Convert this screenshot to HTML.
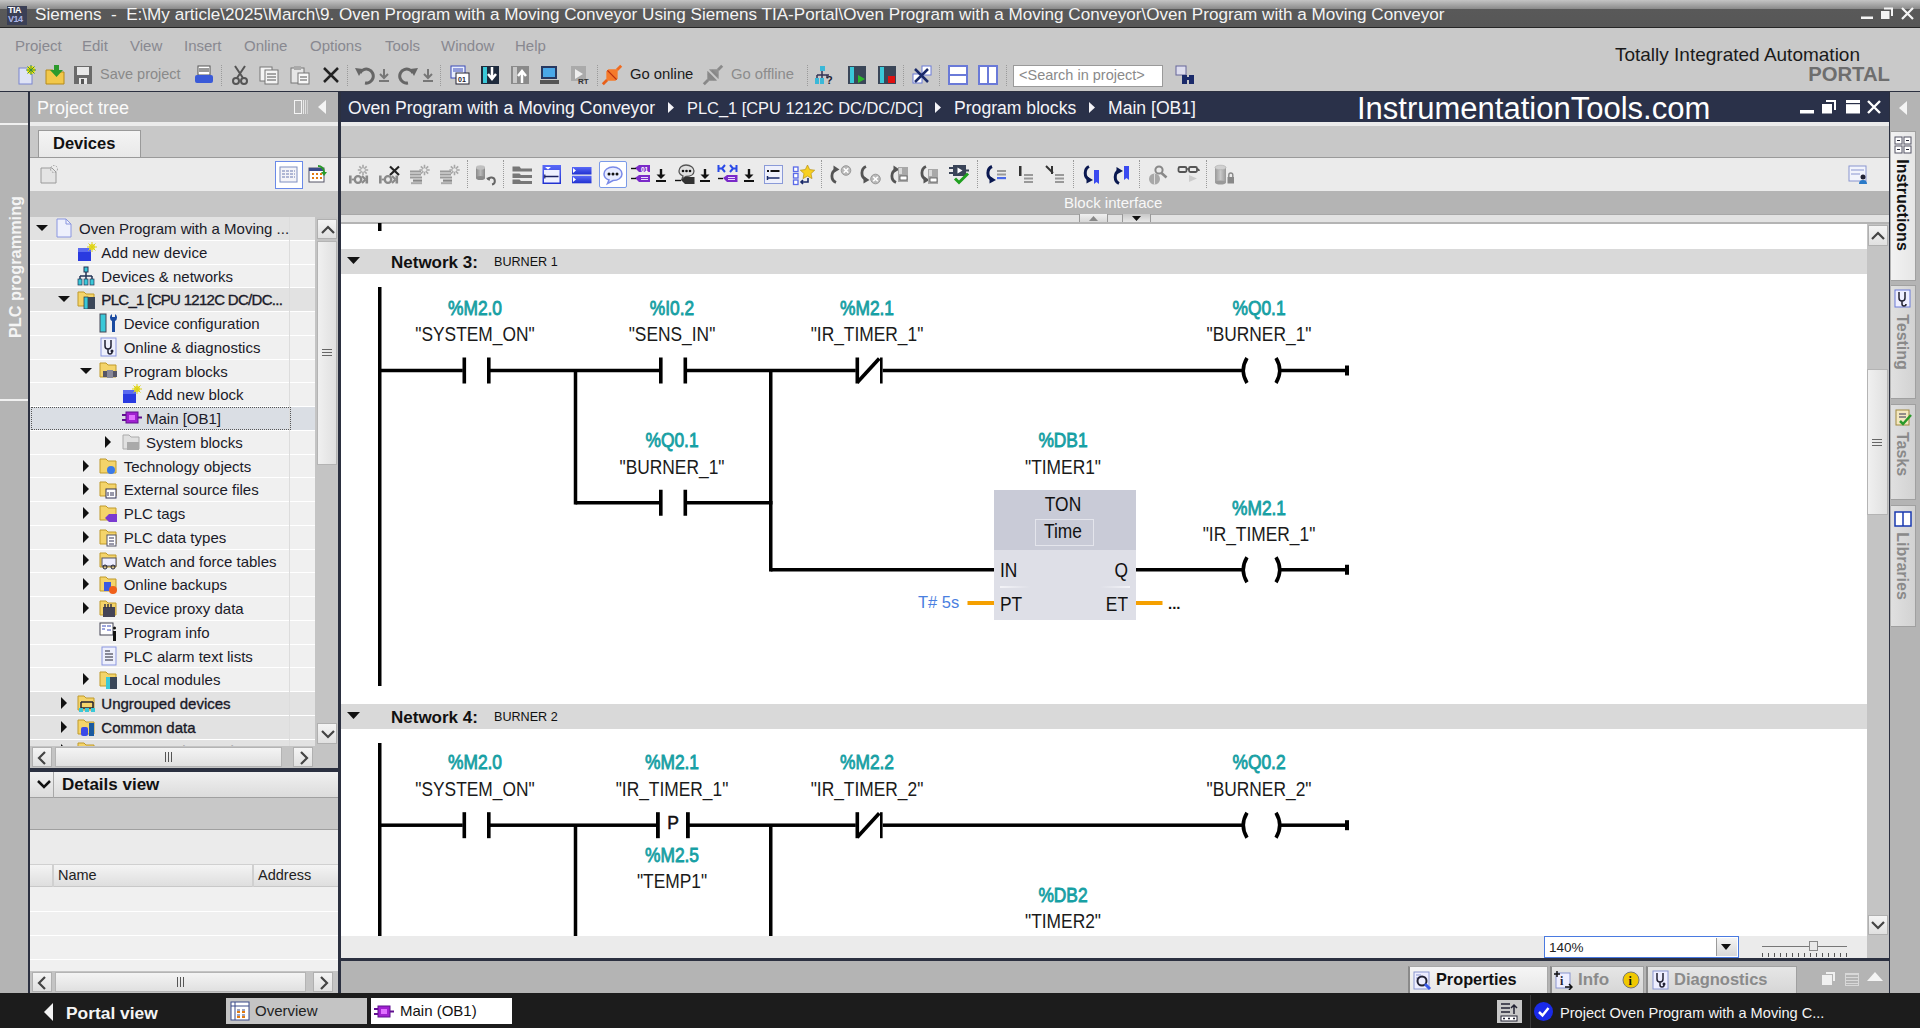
<!DOCTYPE html><html><head><meta charset="utf-8"><style>
html,body{margin:0;padding:0;width:1920px;height:1028px;overflow:hidden;background:#b4b4b4;font-family:"Liberation Sans", sans-serif;}
div{box-sizing:border-box;}
</style></head><body>
<div style="position:absolute;left:0px;top:0px;width:1920px;height:28px;background:linear-gradient(#c4c4c4 0px,#8a8a8a 9px,#595959 9px,#575757 27px,#262626 27px);"></div>
<div style="position:absolute;left:7px;top:6px;width:20px;height:19px;background:#3a3f55;"></div>
<div style="position:absolute;left:8px;top:6px;font-size:9px;line-height:9px;color:#fff;font-weight:bold;white-space:nowrap;letter-spacing:-0.5px;">TIA</div>
<div style="position:absolute;left:8px;top:15px;font-size:9px;line-height:9px;color:#aab4e6;font-weight:bold;white-space:nowrap;letter-spacing:-0.5px;">V14</div>
<div style="position:absolute;left:35px;top:6px;font-size:17.1px;line-height:17.1px;color:#f4f4f4;font-weight:normal;white-space:nowrap;">Siemens&nbsp; - &nbsp;E:\My article\2025\March\9. Oven Program with a Moving Conveyor Using Siemens TIA-Portal\Oven Program with a Moving Conveyor\Oven Program with a Moving Conveyor</div>
<svg style="position:absolute;left:1858px;top:5px" width="60" height="18" viewBox="0 0 60 18"><rect x="3" y="11.5" width="12" height="2.5" fill="#f4f4f4"/><rect x="23" y="6" width="8.5" height="8" fill="#f4f4f4"/><path d="M26 3.5h8v7.5" fill="none" stroke="#f4f4f4" stroke-width="2"/><path d="M44 3l11 11M55 3L44 14" stroke="#f4f4f4" stroke-width="2.2"/></svg>
<div style="position:absolute;left:0px;top:28px;width:1920px;height:64px;background:#c9c9c9;"></div>
<div style="position:absolute;left:15px;top:38px;font-size:15px;line-height:15px;color:#888890;font-weight:normal;white-space:nowrap;">Project</div>
<div style="position:absolute;left:82px;top:38px;font-size:15px;line-height:15px;color:#888890;font-weight:normal;white-space:nowrap;">Edit</div>
<div style="position:absolute;left:130px;top:38px;font-size:15px;line-height:15px;color:#888890;font-weight:normal;white-space:nowrap;">View</div>
<div style="position:absolute;left:184px;top:38px;font-size:15px;line-height:15px;color:#888890;font-weight:normal;white-space:nowrap;">Insert</div>
<div style="position:absolute;left:244px;top:38px;font-size:15px;line-height:15px;color:#888890;font-weight:normal;white-space:nowrap;">Online</div>
<div style="position:absolute;left:310px;top:38px;font-size:15px;line-height:15px;color:#888890;font-weight:normal;white-space:nowrap;">Options</div>
<div style="position:absolute;left:385px;top:38px;font-size:15px;line-height:15px;color:#888890;font-weight:normal;white-space:nowrap;">Tools</div>
<div style="position:absolute;left:441px;top:38px;font-size:15px;line-height:15px;color:#888890;font-weight:normal;white-space:nowrap;">Window</div>
<div style="position:absolute;left:515px;top:38px;font-size:15px;line-height:15px;color:#888890;font-weight:normal;white-space:nowrap;">Help</div>
<div style="position:absolute;right:60px;top:45px;font-size:19px;line-height:19px;color:#1a1a1a;white-space:nowrap">Totally Integrated Automation</div>
<div style="position:absolute;right:30px;top:63.5px;font-size:20.3px;line-height:21px;color:#6e6e6e;font-weight:bold;white-space:nowrap">PORTAL</div>
<div style="position:absolute;left:0px;top:91px;width:1920px;height:1px;background:#2b3040;"></div>
<div style="position:absolute;left:0px;top:92px;width:29px;height:901px;background:#b4b4b4;"></div>
<div style="position:absolute;left:0px;top:123px;width:28px;height:2px;background:#f0f0f0;"></div>
<div style="position:absolute;left:0px;top:399px;width:28px;height:2px;background:#f0f0f0;"></div>
<div style="position:absolute;left:-55.5px;top:257.5px;width:140px;height:20px;transform:rotate(-90deg);font-size:16.3px;line-height:20px;color:#f4f4f4;font-weight:bold;text-align:center;white-space:nowrap;">PLC programming</div>
<div style="position:absolute;left:28px;top:92px;width:2px;height:901px;background:#2b3040;"></div>
<div style="position:absolute;left:30px;top:92px;width:308px;height:30px;background:#b4b4b4;"></div>
<div style="position:absolute;left:37px;top:99px;font-size:18px;line-height:18px;color:#fafafa;font-weight:normal;white-space:nowrap;">Project tree</div>
<div style="position:absolute;left:30px;top:122px;width:308px;height:4px;background:#ececec;"></div>
<div style="position:absolute;left:30px;top:126px;width:308px;height:31px;background:#c8c8c8;"></div>
<div style="position:absolute;left:38px;top:130px;width:103px;height:28px;background:linear-gradient(#f4f4f4,#e8e8e8);border:1px solid #9a9a9a;border-bottom:none;"></div>
<div style="position:absolute;left:53px;top:135px;font-size:16.5px;line-height:16.5px;color:#111;font-weight:bold;white-space:nowrap;">Devices</div>
<div style="position:absolute;left:30px;top:157px;width:308px;height:34px;background:#ebebeb;border-top:1px solid #9a9a9a;"></div>
<div style="position:absolute;left:30px;top:191px;width:308px;height:26px;background:#c6c6c6;"></div>
<div style="position:absolute;left:338px;top:92px;width:3px;height:901px;background:#2b3040;"></div>
<div style="position:absolute;left:341px;top:92px;width:1548px;height:30px;background:#2a3149;"></div>
<div style="position:absolute;left:341px;top:122px;width:1548px;height:4px;background:#ebebeb;"></div>
<div style="position:absolute;left:341px;top:126px;width:1548px;height:31px;background:#c8c8c8;"></div>
<div style="position:absolute;left:341px;top:157px;width:1548px;height:34px;background:#ebebeb;border-top:1px solid #9a9a9a;"></div>
<div style="position:absolute;left:341px;top:191px;width:1548px;height:23px;background:#b4b4b4;"></div>
<div style="position:absolute;left:341px;top:214px;width:1548px;height:10px;background:#e2e2e2;border-top:1px solid #a8a8a8;border-bottom:2px solid #b4b4b4;"></div>
<div style="position:absolute;left:341px;top:224px;width:1526px;height:712px;background:#fff;"></div>
<div style="position:absolute;left:341px;top:936px;width:1526px;height:22px;background:#ebebeb;"></div>
<div style="position:absolute;left:1867px;top:224px;width:22px;height:734px;background:#c4c4c4;"></div>
<div style="position:absolute;left:341px;top:958px;width:1548px;height:3px;background:#2b3040;"></div>
<div style="position:absolute;left:341px;top:961px;width:1548px;height:32px;background:#b4b4b4;"></div>
<div style="position:absolute;left:1889px;top:92px;width:31px;height:901px;background:#b4b4b4;border-left:1px solid #2b3040;"></div>
<svg style="position:absolute;left:17px;top:65px" width="20" height="20" viewBox="0 0 20 20"><rect x="2" y="3" width="13" height="16" fill="#dfe3f5" stroke="#7a86d0"/><circle cx="14" cy="5" r="4" fill="#f5e600"/><path d="M14 0v10M9 5h10M10.5 1.5l7 7M17.5 1.5l-7 7" stroke="#3a8a40" stroke-width="1"/></svg>
<svg style="position:absolute;left:45px;top:65px" width="20" height="20" viewBox="0 0 20 20"><path d="M1 5h7l2 2h9v12H1z" fill="#f2c84a" stroke="#b58a1a"/><path d="M9 0h5v5h4l-6.5 7L5 5h4z" fill="#2c9a2c"/></svg>
<svg style="position:absolute;left:73px;top:65px" width="20" height="20" viewBox="0 0 20 20"><rect x="1" y="1" width="18" height="18" fill="#6a6a6a"/><rect x="4" y="2" width="12" height="8" fill="#e8e8e8"/><rect x="6" y="13" width="8" height="6" fill="#e8e8e8"/><rect x="8" y="14" width="3" height="5" fill="#555"/></svg>
<div style="position:absolute;left:100px;top:67px;font-size:14.5px;line-height:14.5px;color:#8a8a8a;font-weight:normal;white-space:nowrap;">Save project</div>
<svg style="position:absolute;left:194px;top:65px" width="20" height="20" viewBox="0 0 20 20"><rect x="4" y="1" width="12" height="9" fill="#fff" stroke="#555"/><path d="M5 4h10M5 6h10" stroke="#333"/><rect x="1" y="10" width="18" height="8" rx="2" fill="#3a5ad8"/></svg>
<div style="position:absolute;left:221px;top:65px;width:1px;height:21px;border-left:1px dotted #9a9a9a"></div>
<svg style="position:absolute;left:231px;top:65px" width="18" height="20" viewBox="0 0 18 20"><path d="M4 1l8 12M14 1l-8 12" stroke="#555" stroke-width="2"/><circle cx="5" cy="16" r="3" fill="none" stroke="#555" stroke-width="2"/><circle cx="13" cy="16" r="3" fill="none" stroke="#555" stroke-width="2"/></svg>
<svg style="position:absolute;left:259px;top:65px" width="20" height="20" viewBox="0 0 20 20"><rect x="1" y="2" width="12" height="14" fill="#f4f4f4" stroke="#777"/><rect x="6" y="5" width="13" height="14" fill="#f4f4f4" stroke="#777"/><path d="M8 9h9M8 12h9M8 15h9" stroke="#555"/></svg>
<svg style="position:absolute;left:290px;top:65px" width="20" height="20" viewBox="0 0 20 20"><rect x="1" y="3" width="13" height="15" fill="#e6e6e6" stroke="#777"/><rect x="4" y="1" width="7" height="4" fill="#aaa"/><rect x="8" y="8" width="11" height="11" fill="#f8f8f8" stroke="#777"/><path d="M10 12h7M10 15h7" stroke="#555"/></svg>
<svg style="position:absolute;left:322px;top:65px" width="18" height="20" viewBox="0 0 18 20"><path d="M2 3l14 14M16 3L2 17" stroke="#222" stroke-width="2.5"/></svg>
<div style="position:absolute;left:347px;top:65px;width:1px;height:21px;border-left:1px dotted #9a9a9a"></div>
<svg style="position:absolute;left:355px;top:65px" width="20" height="20" viewBox="0 0 20 20"><path d="M5 8a7 7 0 1 1 5 10" fill="none" stroke="#666" stroke-width="3"/><path d="M0 3l8 1-4 7z" fill="#666"/></svg>
<svg style="position:absolute;left:379px;top:69px" width="10" height="14" viewBox="0 0 10 14"><path d="M5 0v8M1 5l4 4 4-4M0 12h10" stroke="#777" stroke-width="2" fill="none"/></svg>
<svg style="position:absolute;left:398px;top:65px" width="20" height="20" viewBox="0 0 20 20"><path d="M15 8a7 7 0 1 0-5 10" fill="none" stroke="#666" stroke-width="3"/><path d="M20 3l-8 1 4 7z" fill="#666"/></svg>
<svg style="position:absolute;left:423px;top:69px" width="10" height="14" viewBox="0 0 10 14"><path d="M5 0v8M1 5l4 4 4-4M0 12h10" stroke="#777" stroke-width="2" fill="none"/></svg>
<div style="position:absolute;left:440px;top:65px;width:1px;height:21px;border-left:1px dotted #9a9a9a"></div>
<svg style="position:absolute;left:450px;top:65px" width="20" height="20" viewBox="0 0 20 20"><rect x="1" y="1" width="14" height="12" fill="#e8eefc" stroke="#3a4ab8"/><rect x="6" y="8" width="13" height="11" fill="#fff" stroke="#223"/><path d="M3 4h10M3 6h10" stroke="#3a4ab8"/><text x="8" y="17" font-size="7" font-family="Liberation Sans" font-weight="bold" fill="#223">01</text></svg>
<svg style="position:absolute;left:480px;top:65px" width="20" height="20" viewBox="0 0 20 20"><rect x="1" y="1" width="18" height="18" fill="#1e2a3c"/><rect x="3" y="2" width="4" height="16" fill="#3ac8d8"/><path d="M12 2v10M8 9l4 5 4-5" stroke="#fff" stroke-width="2.5" fill="none"/></svg>
<svg style="position:absolute;left:510px;top:65px" width="20" height="20" viewBox="0 0 20 20"><rect x="1" y="1" width="18" height="18" fill="#8a8a8a"/><rect x="3" y="2" width="4" height="16" fill="#c8c8c8"/><path d="M12 18V8M8 11l4-5 4 5" stroke="#fff" stroke-width="2.5" fill="none"/></svg>
<svg style="position:absolute;left:540px;top:65px" width="20" height="20" viewBox="0 0 20 20"><rect x="1" y="1" width="16" height="13" fill="#283860"/><rect x="3" y="3" width="12" height="9" fill="#4aa8e8"/><rect x="0" y="15" width="19" height="4" fill="#555"/></svg>
<svg style="position:absolute;left:570px;top:65px" width="20" height="20" viewBox="0 0 20 20"><rect x="1" y="1" width="15" height="15" fill="#aaa"/><path d="M5 4l8 5-8 5z" fill="#eee"/><text x="8" y="19" font-size="8" font-family="Liberation Sans" font-weight="bold" fill="#333">RT</text></svg>
<div style="position:absolute;left:597px;top:65px;width:1px;height:21px;border-left:1px dotted #9a9a9a"></div>
<svg style="position:absolute;left:601px;top:64px" width="22" height="22" viewBox="0 0 22 22"><g transform="rotate(45 11 11)"><rect x="9.6" y="-2" width="2.8" height="6" fill="#f06a1e"/><path d="M11 3 L17.5 9.5 L17.5 12.5 L11 19 L4.5 12.5 L4.5 9.5 Z" fill="#f57a2a"/><rect x="9.6" y="18" width="2.8" height="6" fill="#e8601a"/><path d="M4.5 11h13" stroke="#b83010" stroke-width="1.3"/></g></svg>
<div style="position:absolute;left:630px;top:67px;font-size:14.8px;line-height:14.8px;color:#1a1a1a;font-weight:normal;white-space:nowrap;">Go online</div>
<svg style="position:absolute;left:702px;top:64px" width="22" height="22" viewBox="0 0 22 22"><g transform="rotate(45 11 11)"><rect x="9.6" y="-2" width="2.8" height="6" fill="#8a8a8a"/><path d="M11 3 L17.5 9.5 L17.5 10 L4.5 10 L4.5 9.5 Z" fill="#909090"/><path d="M4.5 12 L17.5 12 L17.5 12.5 L11 19 L4.5 12.5 Z" fill="#8a8a8a"/><path d="M7 8.5h8M7 13.5h8" stroke="#888" stroke-width="2"/><rect x="9.6" y="18" width="2.8" height="6" fill="#888"/></g></svg>
<div style="position:absolute;left:731px;top:67px;font-size:14.8px;line-height:14.8px;color:#8c8c8c;font-weight:normal;white-space:nowrap;">Go offline</div>
<div style="position:absolute;left:807px;top:65px;width:1px;height:21px;border-left:1px dotted #9a9a9a"></div>
<svg style="position:absolute;left:815px;top:65px" width="20" height="20" viewBox="0 0 20 20"><rect x="5" y="1" width="5" height="5" fill="#3ab8d8"/><path d="M7 6v4M2 10h12M2 10v3M7 10v3M12 10v3" stroke="#335" stroke-width="1.5" fill="none"/><rect x="0" y="13" width="4" height="6" fill="#3ab8d8"/><rect x="5" y="13" width="4" height="6" fill="#3ab8d8"/><text x="11" y="19" font-size="11" font-family="Liberation Sans" font-weight="bold" fill="#223">?</text></svg>
<svg style="position:absolute;left:847px;top:65px" width="20" height="20" viewBox="0 0 20 20"><rect x="1" y="1" width="18" height="18" fill="#3a4658"/><rect x="3" y="2" width="4" height="16" fill="#3ac8d8"/><path d="M11 10l7 4-7 4z" fill="#2ab82a"/></svg>
<svg style="position:absolute;left:877px;top:65px" width="20" height="20" viewBox="0 0 20 20"><rect x="1" y="1" width="18" height="18" fill="#3a4658"/><rect x="3" y="2" width="4" height="16" fill="#3ac8d8"/><rect x="11" y="11" width="7" height="7" fill="#e01010"/></svg>
<div style="position:absolute;left:903px;top:65px;width:1px;height:21px;border-left:1px dotted #9a9a9a"></div>
<svg style="position:absolute;left:912px;top:65px" width="20" height="20" viewBox="0 0 20 20"><rect x="1" y="9" width="9" height="9" fill="#fff" stroke="#6a7ad8"/><rect x="10" y="1" width="9" height="9" fill="#fff" stroke="#6a7ad8"/><path d="M3 4l13 13M16 4L3 17" stroke="#1a2a6a" stroke-width="2.5"/></svg>
<div style="position:absolute;left:939px;top:65px;width:1px;height:21px;border-left:1px dotted #9a9a9a"></div>
<svg style="position:absolute;left:948px;top:65px" width="20" height="20" viewBox="0 0 20 20"><rect x="1" y="1" width="18" height="18" fill="#fff" stroke="#6a7ad8" stroke-width="2"/><path d="M1 10h18" stroke="#6a7ad8" stroke-width="2"/></svg>
<svg style="position:absolute;left:978px;top:65px" width="20" height="20" viewBox="0 0 20 20"><rect x="1" y="1" width="18" height="18" fill="#fff" stroke="#6a7ad8" stroke-width="2"/><path d="M10 1v18" stroke="#6a7ad8" stroke-width="2"/></svg>
<div style="position:absolute;left:1006px;top:65px;width:1px;height:21px;border-left:1px dotted #9a9a9a"></div>
<div style="position:absolute;left:1013px;top:65px;width:150px;height:22px;background:#fff;border:1px solid #9a9a9a;"></div>
<div style="position:absolute;left:1019px;top:68px;font-size:14.5px;line-height:14.5px;color:#8a8a8a;font-weight:normal;white-space:nowrap;">&lt;Search in project&gt;</div>
<svg style="position:absolute;left:1175px;top:65px" width="20" height="20" viewBox="0 0 20 20"><rect x="1" y="1" width="10" height="9" fill="#dde" stroke="#669"/><rect x="7" y="10" width="5" height="9" fill="#1a2a6a"/><rect x="14" y="10" width="5" height="9" fill="#1a2a6a"/><rect x="10" y="12" width="6" height="3" fill="#1a2a6a"/></svg>
<div style="position:absolute;left:294px;top:100px;width:8px;height:14px;border:1.5px solid #f4f4f4;"></div>
<div style="position:absolute;left:303px;top:100px;width:1px;height:14px;background:#e8e8e8;"></div>
<div style="position:absolute;left:305px;top:100px;width:1px;height:14px;background:#e0e0e0;"></div>
<div style="position:absolute;left:307px;top:100px;width:1px;height:14px;background:#d0d0d0;"></div>
<svg style="position:absolute;left:316px;top:99px" width="12" height="16" viewBox="0 0 12 16"><path d="M10 1L2 8l8 7z" fill="#f4f4f4"/></svg>
<svg style="position:absolute;left:40px;top:164px" width="20" height="20" viewBox="0 0 20 20"><path d="M1 4h11l4 4v11H1z" fill="#e4e4e4" stroke="#9a9a9a"/><circle cx="14" cy="5" r="3.5" fill="none" stroke="#999" stroke-dasharray="1.5 1.5"/></svg>
<div style="position:absolute;left:275px;top:161px;width:28px;height:28px;background:#fff;border:1px solid #6a8ae8;"></div>
<svg style="position:absolute;left:279px;top:165px" width="20" height="20" viewBox="0 0 20 20"><rect x="1" y="2" width="17" height="15" fill="#f4f4f8" stroke="#8090c0"/><path d="M3 6h13M3 9h13M3 12h13" stroke="#6a7ab0" stroke-dasharray="3 1"/></svg>
<svg style="position:absolute;left:308px;top:164px" width="20" height="20" viewBox="0 0 20 20"><rect x="1" y="4" width="15" height="14" fill="#fff" stroke="#556"/><rect x="1" y="4" width="15" height="3" fill="#3a4a8a"/><path d="M4 10h2M8 10h2M12 10h2M4 14h2M8 14h2M12 14h2" stroke="#e27a10" stroke-width="2"/><path d="M10 1a7 7 0 0 1 7 7h2l-3 4-3-4h2a5 5 0 0 0-5-5z" fill="#2a9a2a"/></svg>
<div style="position:absolute;left:30px;top:217px;width:285px;height:529px;background:#ffffff;overflow:hidden;"></div>
<div style="position:absolute;left:30px;top:217.0px;width:285px;height:22.75px;background:#e2e2e2;"></div>
<svg style="position:absolute;left:36px;top:225px" width="12" height="7" viewBox="0 0 12 7"><path d="M0 0h12L6 6z" fill="#111"/></svg>
<svg style="position:absolute;left:55.0px;top:218px" width="20" height="20" viewBox="0 0 20 20"><path d="M2 1h9l5 5v13H2z" fill="#eef0fc" stroke="#8a96e0"/><path d="M11 1v5h5" fill="none" stroke="#8a96e0"/></svg>
<div style="position:absolute;left:79.0px;top:221.0px;font-size:15px;line-height:15px;color:#1a1a28;font-weight:normal;white-space:nowrap;">Oven Program with a Moving ...</div>
<div style="position:absolute;left:30px;top:240.75px;width:285px;height:22.75px;background:#f0f0f0;"></div>
<svg style="position:absolute;left:77.2px;top:242px" width="20" height="20" viewBox="0 0 20 20"><rect x="1" y="6" width="13" height="13" fill="#2a3ae0"/><rect x="1" y="6" width="13" height="4" fill="#5a6af0"/><circle cx="15" cy="5" r="3" fill="#f0e020"/><path d="M15 0v10M10 5h10M11.5 1.5l7 7M18.5 1.5l-7 7" stroke="#d8d020" stroke-width="1"/></svg>
<div style="position:absolute;left:101.33px;top:244.75px;font-size:15px;line-height:15px;color:#1a1a28;font-weight:normal;white-space:nowrap;">Add new device</div>
<div style="position:absolute;left:30px;top:264.5px;width:285px;height:22.75px;background:#f0f0f0;"></div>
<svg style="position:absolute;left:77.2px;top:266px" width="20" height="20" viewBox="0 0 20 20"><rect x="7" y="1" width="4" height="5" fill="#3ac8d8" stroke="#235"/><path d="M9 6v4M3 10h12M3 10v3M9 10v3M15 10v3" stroke="#235" stroke-width="1.5" fill="none"/><rect x="1" y="13" width="4" height="6" fill="#3ac8d8" stroke="#235" stroke-width=".7"/><rect x="7" y="13" width="4" height="6" fill="#3ac8d8" stroke="#235" stroke-width=".7"/><rect x="13" y="13" width="4" height="6" fill="#3ac8d8" stroke="#235" stroke-width=".7"/></svg>
<div style="position:absolute;left:101.33px;top:268.5px;font-size:15px;line-height:15px;color:#1a1a28;font-weight:normal;white-space:nowrap;">Devices &amp; networks</div>
<div style="position:absolute;left:30px;top:288.25px;width:285px;height:22.75px;background:#e2e2e2;"></div>
<svg style="position:absolute;left:58px;top:296px" width="12" height="7" viewBox="0 0 12 7"><path d="M0 0h12L6 6z" fill="#111"/></svg>
<svg style="position:absolute;left:77.2px;top:289px" width="20" height="20" viewBox="0 0 20 20"><path d="M1 3h6l2 2h8v12H1z" fill="#f4d46a" stroke="#c09a2a"/><rect x="7" y="8" width="4" height="12" fill="#3ac8d8" stroke="#234" stroke-width=".7"/><rect x="11" y="8" width="7" height="12" fill="#3a4658"/></svg>
<div style="position:absolute;left:101.33px;top:292.25px;font-size:15px;line-height:15px;color:#1a1a28;font-weight:normal;white-space:nowrap;-webkit-text-stroke:0.35px #1a1a28;letter-spacing:-0.7px;">PLC_1 [CPU 1212C DC/DC...</div>
<div style="position:absolute;left:30px;top:312.0px;width:285px;height:22.75px;background:#f0f0f0;"></div>
<svg style="position:absolute;left:99.4px;top:313px" width="20" height="20" viewBox="0 0 20 20"><rect x="1" y="1" width="6" height="18" fill="#3ac8d8" stroke="#445"/><path d="M13 1a4 4 0 0 0 0 7v11h3V8a4 4 0 0 0 0-7v3h-3z" fill="#1a4aa0"/></svg>
<div style="position:absolute;left:123.66px;top:316.0px;font-size:15px;line-height:15px;color:#1a1a28;font-weight:normal;white-space:nowrap;">Device configuration</div>
<div style="position:absolute;left:30px;top:335.75px;width:285px;height:22.75px;background:#f0f0f0;"></div>
<svg style="position:absolute;left:99.4px;top:337px" width="20" height="20" viewBox="0 0 20 20"><rect x="2" y="1" width="15" height="18" fill="#eef0fc" stroke="#8a96e0"/><path d="M6 3v6a3 3 0 0 0 6 0V3M9 12v3a2 2 0 0 0 4 0" fill="none" stroke="#223" stroke-width="1.5"/><circle cx="13" cy="14" r="1.5" fill="#223"/></svg>
<div style="position:absolute;left:123.66px;top:339.75px;font-size:15px;line-height:15px;color:#1a1a28;font-weight:normal;white-space:nowrap;">Online &amp; diagnostics</div>
<div style="position:absolute;left:30px;top:359.5px;width:285px;height:22.75px;background:#f0f0f0;"></div>
<svg style="position:absolute;left:80px;top:368px" width="12" height="7" viewBox="0 0 12 7"><path d="M0 0h12L6 6z" fill="#111"/></svg>
<svg style="position:absolute;left:99.4px;top:360px" width="20" height="20" viewBox="0 0 20 20"><path d="M1 3h6l2 2h8v12H1z" fill="#f4d46a" stroke="#c09a2a"/><rect x="4" y="11" width="14" height="6" fill="#556" /><rect x="8" y="10" width="6" height="8" fill="#889"/></svg>
<div style="position:absolute;left:123.66px;top:363.5px;font-size:15px;line-height:15px;color:#1a1a28;font-weight:normal;white-space:nowrap;">Program blocks</div>
<div style="position:absolute;left:30px;top:383.25px;width:285px;height:22.75px;background:#f0f0f0;"></div>
<svg style="position:absolute;left:121.6px;top:384px" width="20" height="20" viewBox="0 0 20 20"><rect x="1" y="6" width="13" height="13" fill="#2a3ae0"/><rect x="1" y="6" width="13" height="4" fill="#5a6af0"/><circle cx="15" cy="5" r="3" fill="#f0e020"/><path d="M15 0v10M10 5h10M11.5 1.5l7 7M18.5 1.5l-7 7" stroke="#d8d020" stroke-width="1"/></svg>
<div style="position:absolute;left:145.99px;top:387.25px;font-size:15px;line-height:15px;color:#1a1a28;font-weight:normal;white-space:nowrap;">Add new block</div>
<div style="position:absolute;left:30px;top:407.0px;width:285px;height:22.75px;background:#dadee4;"></div>
<div style="position:absolute;left:31px;top:407.0px;width:260px;height:22.75px;border:1px dotted #555;"></div>
<svg style="position:absolute;left:121.6px;top:408px" width="20" height="20" viewBox="0 0 20 20"><rect x="4" y="4" width="12" height="11" fill="#a020d0" stroke="#601090"/><path d="M0 7h4M0 12h4M16 9.5h4" stroke="#601090" stroke-width="2"/><rect x="7" y="7" width="6" height="5" fill="#e070ff"/></svg>
<div style="position:absolute;left:145.99px;top:411.0px;font-size:15px;line-height:15px;color:#1a1a28;font-weight:normal;white-space:nowrap;">Main [OB1]</div>
<div style="position:absolute;left:30px;top:430.75px;width:285px;height:22.75px;background:#f0f0f0;"></div>
<svg style="position:absolute;left:105px;top:436px" width="7" height="12" viewBox="0 0 7 12"><path d="M0 0v12l6-6z" fill="#111"/></svg>
<svg style="position:absolute;left:121.6px;top:432px" width="20" height="20" viewBox="0 0 20 20"><path d="M1 3h6l2 2h8v12H1z" fill="#e0e0e0" stroke="#aaa"/><rect x="5" y="10" width="12" height="8" fill="#aaa"/></svg>
<div style="position:absolute;left:145.99px;top:434.75px;font-size:15px;line-height:15px;color:#1a1a28;font-weight:normal;white-space:nowrap;">System blocks</div>
<div style="position:absolute;left:30px;top:454.5px;width:285px;height:22.75px;background:#f0f0f0;"></div>
<svg style="position:absolute;left:83px;top:460px" width="7" height="12" viewBox="0 0 7 12"><path d="M0 0v12l6-6z" fill="#111"/></svg>
<svg style="position:absolute;left:99.4px;top:456px" width="20" height="20" viewBox="0 0 20 20"><path d="M1 3h6l2 2h8v12H1z" fill="#f4d46a" stroke="#c09a2a"/><circle cx="12" cy="14" r="4" fill="#3a7ae8"/></svg>
<div style="position:absolute;left:123.66px;top:458.5px;font-size:15px;line-height:15px;color:#1a1a28;font-weight:normal;white-space:nowrap;">Technology objects</div>
<div style="position:absolute;left:30px;top:478.25px;width:285px;height:22.75px;background:#f0f0f0;"></div>
<svg style="position:absolute;left:83px;top:483px" width="7" height="12" viewBox="0 0 7 12"><path d="M0 0v12l6-6z" fill="#111"/></svg>
<svg style="position:absolute;left:99.4px;top:479px" width="20" height="20" viewBox="0 0 20 20"><path d="M1 3h6l2 2h8v12H1z" fill="#f4d46a" stroke="#c09a2a"/><rect x="7" y="10" width="10" height="9" fill="#fff" stroke="#335"/><path d="M9 13v4M12 13v4M14 13v4" stroke="#335"/></svg>
<div style="position:absolute;left:123.66px;top:482.25px;font-size:15px;line-height:15px;color:#1a1a28;font-weight:normal;white-space:nowrap;">External source files</div>
<div style="position:absolute;left:30px;top:502.0px;width:285px;height:22.75px;background:#f0f0f0;"></div>
<svg style="position:absolute;left:83px;top:507px" width="7" height="12" viewBox="0 0 7 12"><path d="M0 0v12l6-6z" fill="#111"/></svg>
<svg style="position:absolute;left:99.4px;top:503px" width="20" height="20" viewBox="0 0 20 20"><path d="M1 3h6l2 2h8v12H1z" fill="#f4d46a" stroke="#c09a2a"/><path d="M6 15l4-4h8v8h-8z" fill="#7a3ad0"/></svg>
<div style="position:absolute;left:123.66px;top:506.0px;font-size:15px;line-height:15px;color:#1a1a28;font-weight:normal;white-space:nowrap;">PLC tags</div>
<div style="position:absolute;left:30px;top:525.75px;width:285px;height:22.75px;background:#f0f0f0;"></div>
<svg style="position:absolute;left:83px;top:531px" width="7" height="12" viewBox="0 0 7 12"><path d="M0 0v12l6-6z" fill="#111"/></svg>
<svg style="position:absolute;left:99.4px;top:527px" width="20" height="20" viewBox="0 0 20 20"><path d="M1 3h6l2 2h8v12H1z" fill="#f4d46a" stroke="#c09a2a"/><rect x="8" y="8" width="9" height="11" fill="#fff" stroke="#556"/><path d="M10 11h5M10 14h5M10 17h5" stroke="#335"/></svg>
<div style="position:absolute;left:123.66px;top:529.75px;font-size:15px;line-height:15px;color:#1a1a28;font-weight:normal;white-space:nowrap;">PLC data types</div>
<div style="position:absolute;left:30px;top:549.5px;width:285px;height:22.75px;background:#f0f0f0;"></div>
<svg style="position:absolute;left:83px;top:554px" width="7" height="12" viewBox="0 0 7 12"><path d="M0 0v12l6-6z" fill="#111"/></svg>
<svg style="position:absolute;left:99.4px;top:550px" width="20" height="20" viewBox="0 0 20 20"><path d="M1 3h6l2 2h8v12H1z" fill="#f4d46a" stroke="#c09a2a"/><rect x="3" y="8" width="14" height="8" fill="#eef" stroke="#556"/><circle cx="6" cy="17" r="2" fill="none" stroke="#223"/><circle cx="14" cy="17" r="2" fill="none" stroke="#223"/></svg>
<div style="position:absolute;left:123.66px;top:553.5px;font-size:15px;line-height:15px;color:#1a1a28;font-weight:normal;white-space:nowrap;">Watch and force tables</div>
<div style="position:absolute;left:30px;top:573.25px;width:285px;height:22.75px;background:#f0f0f0;"></div>
<svg style="position:absolute;left:83px;top:578px" width="7" height="12" viewBox="0 0 7 12"><path d="M0 0v12l6-6z" fill="#111"/></svg>
<svg style="position:absolute;left:99.4px;top:574px" width="20" height="20" viewBox="0 0 20 20"><path d="M1 3h6l2 2h8v12H1z" fill="#f4d46a" stroke="#c09a2a"/><rect x="5" y="8" width="7" height="9" fill="#3a5ae0"/><circle cx="14" cy="16" r="4" fill="#f0601a"/></svg>
<div style="position:absolute;left:123.66px;top:577.25px;font-size:15px;line-height:15px;color:#1a1a28;font-weight:normal;white-space:nowrap;">Online backups</div>
<div style="position:absolute;left:30px;top:597.0px;width:285px;height:22.75px;background:#f0f0f0;"></div>
<svg style="position:absolute;left:83px;top:602px" width="7" height="12" viewBox="0 0 7 12"><path d="M0 0v12l6-6z" fill="#111"/></svg>
<svg style="position:absolute;left:99.4px;top:598px" width="20" height="20" viewBox="0 0 20 20"><path d="M1 3h6l2 2h8v12H1z" fill="#f4d46a" stroke="#c09a2a"/><rect x="4" y="9" width="12" height="10" fill="#445"/><path d="M6 6v4M9 6v4M12 6v4" stroke="#334" stroke-width="1.5"/></svg>
<div style="position:absolute;left:123.66px;top:601.0px;font-size:15px;line-height:15px;color:#1a1a28;font-weight:normal;white-space:nowrap;">Device proxy data</div>
<div style="position:absolute;left:30px;top:620.75px;width:285px;height:22.75px;background:#f0f0f0;"></div>
<svg style="position:absolute;left:99.4px;top:622px" width="20" height="20" viewBox="0 0 20 20"><rect x="1" y="1" width="13" height="12" fill="#fff" stroke="#445"/><path d="M3 4h4M3 7h3M8 4h4M8 8h4" stroke="#3a4ab8"/><rect x="14" y="9" width="3" height="10" fill="#111"/><circle cx="15.5" cy="6" r="1.5" fill="#111"/></svg>
<div style="position:absolute;left:123.66px;top:624.75px;font-size:15px;line-height:15px;color:#1a1a28;font-weight:normal;white-space:nowrap;">Program info</div>
<div style="position:absolute;left:30px;top:644.5px;width:285px;height:22.75px;background:#f0f0f0;"></div>
<svg style="position:absolute;left:99.4px;top:646px" width="20" height="20" viewBox="0 0 20 20"><rect x="3" y="1" width="14" height="18" fill="#eef0fc" stroke="#8a96e0"/><path d="M6 5h5M6 8h8M6 11h8M6 14h8" stroke="#223"/></svg>
<div style="position:absolute;left:123.66px;top:648.5px;font-size:15px;line-height:15px;color:#1a1a28;font-weight:normal;white-space:nowrap;">PLC alarm text lists</div>
<div style="position:absolute;left:30px;top:668.25px;width:285px;height:22.75px;background:#f0f0f0;"></div>
<svg style="position:absolute;left:83px;top:673px" width="7" height="12" viewBox="0 0 7 12"><path d="M0 0v12l6-6z" fill="#111"/></svg>
<svg style="position:absolute;left:99.4px;top:669px" width="20" height="20" viewBox="0 0 20 20"><path d="M1 3h6l2 2h8v12H1z" fill="#f4d46a" stroke="#c09a2a"/><rect x="7" y="8" width="4" height="12" fill="#3ac8d8"/><rect x="11" y="8" width="7" height="12" fill="#3a4658"/></svg>
<div style="position:absolute;left:123.66px;top:672.25px;font-size:15px;line-height:15px;color:#1a1a28;font-weight:normal;white-space:nowrap;">Local modules</div>
<div style="position:absolute;left:30px;top:692.0px;width:285px;height:22.75px;background:#e2e2e2;"></div>
<svg style="position:absolute;left:61px;top:697px" width="7" height="12" viewBox="0 0 7 12"><path d="M0 0v12l6-6z" fill="#111"/></svg>
<svg style="position:absolute;left:77.2px;top:693px" width="20" height="20" viewBox="0 0 20 20"><path d="M1 3h6l2 2h8v12H1z" fill="#f4d46a" stroke="#c09a2a"/><path d="M4 9h12M4 9v6M16 9v6M4 15h12" stroke="#223" stroke-width="1.5"/><rect x="2" y="15" width="4" height="4" fill="#3ac8d8"/><rect x="8" y="15" width="4" height="4" fill="#3ac8d8"/><rect x="14" y="15" width="4" height="4" fill="#3ac8d8"/></svg>
<div style="position:absolute;left:101.33px;top:696.0px;font-size:15px;line-height:15px;color:#1a1a28;font-weight:normal;white-space:nowrap;-webkit-text-stroke:0.35px #1a1a28;">Ungrouped devices</div>
<div style="position:absolute;left:30px;top:715.75px;width:285px;height:22.75px;background:#e2e2e2;"></div>
<svg style="position:absolute;left:61px;top:721px" width="7" height="12" viewBox="0 0 7 12"><path d="M0 0v12l6-6z" fill="#111"/></svg>
<svg style="position:absolute;left:77.2px;top:717px" width="20" height="20" viewBox="0 0 20 20"><path d="M1 3h6l2 2h8v12H1z" fill="#f4d46a" stroke="#c09a2a"/><rect x="4" y="10" width="7" height="9" rx="2" fill="#3a4ae8"/><rect x="12" y="6" width="5" height="13" fill="#1a5aa0"/></svg>
<div style="position:absolute;left:101.33px;top:719.75px;font-size:15px;line-height:15px;color:#1a1a28;font-weight:normal;white-space:nowrap;-webkit-text-stroke:0.35px #1a1a28;">Common data</div>
<div style="position:absolute;left:30px;top:739.5px;width:285px;height:22.75px;background:#e2e2e2;"></div>
<svg style="position:absolute;left:61px;top:744px" width="7" height="12" viewBox="0 0 7 12"><path d="M0 0v12l6-6z" fill="#111"/></svg>
<svg style="position:absolute;left:77.2px;top:740px" width="20" height="20" viewBox="0 0 20 20"><path d="M1 3h6l2 2h8v12H1z" fill="#f4d46a" stroke="#c09a2a"/></svg>
<div style="position:absolute;left:101.33px;top:743.5px;font-size:15px;line-height:15px;color:#1a1a28;font-weight:normal;white-space:nowrap;-webkit-text-stroke:0.35px #1a1a28;">Documentation settings</div>
<div style="position:absolute;left:289px;top:217px;width:1px;height:529px;background:#dcdcdc;"></div>
<div style="position:absolute;left:30px;top:746px;width:308px;height:22px;background:#c6c6c6;"></div>
<div style="position:absolute;left:315px;top:217px;width:23px;height:529px;background:#c4c4c4;"></div>
<div style="position:absolute;left:317px;top:219px;width:20px;height:20px;background:linear-gradient(#f4f4f4,#e0e0e0);border:1px solid #b0b0b0;"></div>
<svg style="position:absolute;left:320px;top:224px" width="16" height="12" viewBox="0 0 16 12"><path d="M2 9l6-6 6 6" fill="none" stroke="#444" stroke-width="2.2"/></svg>
<div style="position:absolute;left:317px;top:241px;width:20px;height:224px;background:linear-gradient(90deg,#f0f0f0,#e0e0e0);border:1px solid #b4b4b4;"></div>
<div style="position:absolute;left:322px;top:349px;width:10px;height:1px;background:#666;"></div>
<div style="position:absolute;left:322px;top:352px;width:10px;height:1px;background:#666;"></div>
<div style="position:absolute;left:322px;top:355px;width:10px;height:1px;background:#666;"></div>
<div style="position:absolute;left:317px;top:723px;width:20px;height:21px;background:linear-gradient(#f4f4f4,#e0e0e0);border:1px solid #b0b0b0;"></div>
<svg style="position:absolute;left:320px;top:728px" width="16" height="12" viewBox="0 0 16 12"><path d="M2 3l6 6 6-6" fill="none" stroke="#444" stroke-width="2.2"/></svg>
<div style="position:absolute;left:30px;top:746px;width:308px;height:22px;background:#c4c4c4;"></div>
<div style="position:absolute;left:32px;top:747px;width:20px;height:20px;background:linear-gradient(#f4f4f4,#e0e0e0);border:1px solid #b0b0b0;"></div>
<svg style="position:absolute;left:36px;top:750px" width="12" height="16" viewBox="0 0 12 16"><path d="M9 2L3 8l6 6" fill="none" stroke="#444" stroke-width="2.2"/></svg>
<div style="position:absolute;left:55px;top:747px;width:227px;height:20px;background:linear-gradient(#f4f4f4,#e0e0e0);border:1px solid #b4b4b4;"></div>
<div style="position:absolute;left:165px;top:752px;width:1px;height:10px;background:#555;"></div>
<div style="position:absolute;left:168px;top:752px;width:1px;height:10px;background:#555;"></div>
<div style="position:absolute;left:171px;top:752px;width:1px;height:10px;background:#555;"></div>
<div style="position:absolute;left:293px;top:747px;width:20px;height:20px;background:linear-gradient(#f4f4f4,#e0e0e0);border:1px solid #b0b0b0;"></div>
<svg style="position:absolute;left:298px;top:750px" width="12" height="16" viewBox="0 0 12 16"><path d="M3 2l6 6-6 6" fill="none" stroke="#444" stroke-width="2.2"/></svg>
<div style="position:absolute;left:30px;top:768px;width:308px;height:4px;background:#2b3040;"></div>
<div style="position:absolute;left:30px;top:772px;width:308px;height:26px;background:linear-gradient(#f0f0f0,#dcdcdc);border-bottom:1px solid #a0a0a0;"></div>
<div style="position:absolute;left:53px;top:772px;width:1px;height:26px;background:#a8a8a8;"></div>
<svg style="position:absolute;left:36px;top:778px" width="16" height="12" viewBox="0 0 16 12"><path d="M2 3l6 6 6-6" fill="none" stroke="#111" stroke-width="2.5"/></svg>
<div style="position:absolute;left:62px;top:776px;font-size:17px;line-height:17px;color:#111;font-weight:bold;white-space:nowrap;">Details view</div>
<div style="position:absolute;left:30px;top:798px;width:308px;height:32px;background:#c8c8c8;border-bottom:1px solid #a0a0a0;"></div>
<div style="position:absolute;left:30px;top:830px;width:308px;height:34px;background:#ebebeb;"></div>
<div style="position:absolute;left:30px;top:864px;width:308px;height:23px;background:linear-gradient(#f4f4f4,#dedede);border-top:1px solid #d0d0d0;border-bottom:1px solid #c8c8c8;"></div>
<div style="position:absolute;left:52px;top:864px;width:2px;height:23px;background:#d0d0d0;"></div>
<div style="position:absolute;left:252px;top:864px;width:2px;height:23px;background:#d0d0d0;"></div>
<div style="position:absolute;left:58px;top:868px;font-size:14.5px;line-height:14.5px;color:#222;font-weight:normal;white-space:nowrap;">Name</div>
<div style="position:absolute;left:258px;top:868px;font-size:14.5px;line-height:14.5px;color:#222;font-weight:normal;white-space:nowrap;">Address</div>
<div style="position:absolute;left:30px;top:887px;width:308px;height:84px;background:#f0f0f0;"></div>
<div style="position:absolute;left:30px;top:911px;width:308px;height:1px;background:#fff;"></div>
<div style="position:absolute;left:30px;top:935px;width:308px;height:1px;background:#fff;"></div>
<div style="position:absolute;left:30px;top:959px;width:308px;height:1px;background:#fff;"></div>
<div style="position:absolute;left:30px;top:971px;width:308px;height:22px;background:#c4c4c4;"></div>
<div style="position:absolute;left:32px;top:972px;width:20px;height:20px;background:linear-gradient(#f4f4f4,#e0e0e0);border:1px solid #b0b0b0;"></div>
<svg style="position:absolute;left:36px;top:975px" width="12" height="16" viewBox="0 0 12 16"><path d="M9 2L3 8l6 6" fill="none" stroke="#444" stroke-width="2.2"/></svg>
<div style="position:absolute;left:55px;top:972px;width:251px;height:20px;background:linear-gradient(#f4f4f4,#e0e0e0);border:1px solid #b4b4b4;"></div>
<div style="position:absolute;left:177px;top:977px;width:1px;height:10px;background:#555;"></div>
<div style="position:absolute;left:180px;top:977px;width:1px;height:10px;background:#555;"></div>
<div style="position:absolute;left:183px;top:977px;width:1px;height:10px;background:#555;"></div>
<div style="position:absolute;left:313px;top:972px;width:20px;height:20px;background:linear-gradient(#f4f4f4,#e0e0e0);border:1px solid #b0b0b0;"></div>
<svg style="position:absolute;left:318px;top:975px" width="12" height="16" viewBox="0 0 12 16"><path d="M3 2l6 6-6 6" fill="none" stroke="#444" stroke-width="2.2"/></svg>
<div style="position:absolute;left:348px;top:99.5px;font-size:17.6px;line-height:17.6px;color:#f4f4f8;font-weight:normal;white-space:nowrap;">Oven Program with a Moving Conveyor</div>
<svg style="position:absolute;left:668px;top:102px" width="7" height="11" viewBox="0 0 7 11"><path d="M0 0v11l6-5.5z" fill="#f4f4f8"/></svg>
<div style="position:absolute;left:687px;top:99.5px;font-size:16.4px;line-height:16.4px;color:#f4f4f8;font-weight:normal;white-space:nowrap;">PLC_1 [CPU 1212C DC/DC/DC]</div>
<svg style="position:absolute;left:935px;top:102px" width="7" height="11" viewBox="0 0 7 11"><path d="M0 0v11l6-5.5z" fill="#f4f4f8"/></svg>
<div style="position:absolute;left:954px;top:99.5px;font-size:17.6px;line-height:17.6px;color:#f4f4f8;font-weight:normal;white-space:nowrap;">Program blocks</div>
<svg style="position:absolute;left:1089px;top:102px" width="7" height="11" viewBox="0 0 7 11"><path d="M0 0v11l6-5.5z" fill="#f4f4f8"/></svg>
<div style="position:absolute;left:1108px;top:99.5px;font-size:17.6px;line-height:17.6px;color:#f4f4f8;font-weight:normal;white-space:nowrap;">Main [OB1]</div>
<div style="position:absolute;left:1357px;top:92.5px;font-size:31px;line-height:31px;color:#ffffff;font-weight:normal;white-space:nowrap;">InstrumentationTools.com</div>
<svg style="position:absolute;left:1798px;top:98px" width="86" height="18" viewBox="0 0 86 18"><rect x="2" y="12" width="14" height="3.5" fill="#fff"/><rect x="24" y="6" width="10" height="9.5" fill="#fff"/><path d="M28 3h9v9" fill="none" stroke="#fff" stroke-width="2"/><rect x="48" y="2" width="14" height="13.5" fill="#fff"/><rect x="48" y="5" width="14" height="1.2" fill="#2a3149"/><path d="M70 3l12 12M82 3L70 15" stroke="#fff" stroke-width="2.4"/></svg>
<svg style="position:absolute;left:349px;top:165px;overflow:visible" width="20" height="20" viewBox="0 0 20 20"><rect x="0" y="10.5" width="2.6" height="8" fill="#8a8a8a"/><rect x="2.6" y="13.6" width="2.4" height="1.8" fill="#8a8a8a"/><ellipse cx="9" cy="14.5" rx="3.2" ry="3.4" fill="none" stroke="#8a8a8a" stroke-width="2.4"/><rect x="16.5" y="10.5" width="2.6" height="8" fill="#8a8a8a"/><path d="M16.5 14.5L13 11M16.5 14.5L13 18" stroke="#8a8a8a" stroke-width="2.2"/><path d="M15.80 5.00L19.20 5.00M15.27 6.27L17.68 8.68M14.00 6.80L14.00 10.20M12.73 6.27L10.32 8.68M12.20 5.00L8.80 5.00M12.73 3.73L10.32 1.32M14.00 3.20L14.00 -0.20M15.27 3.73L17.68 1.32" stroke="#a8a8a8" stroke-width="1.6"/></svg>
<svg style="position:absolute;left:379px;top:165px;overflow:visible" width="22" height="20" viewBox="0 0 22 20"><rect x="0" y="10.5" width="2.6" height="8" fill="#8a8a8a"/><rect x="2.6" y="13.6" width="2.4" height="1.8" fill="#8a8a8a"/><ellipse cx="9" cy="14.5" rx="3.2" ry="3.4" fill="none" stroke="#8a8a8a" stroke-width="2.4"/><rect x="16.5" y="10.5" width="2.6" height="8" fill="#8a8a8a"/><path d="M16.5 14.5L13 11M16.5 14.5L13 18" stroke="#8a8a8a" stroke-width="2.2"/><path d="M11 1.5l9 8.5M20 1.5l-9 8.5" stroke="#222" stroke-width="2.2"/></svg>
<svg style="position:absolute;left:410px;top:165px;overflow:visible" width="20" height="20" viewBox="0 0 20 20"><rect x="0" y="5.5" width="11" height="2" fill="#9a9a9a"/><rect x="0" y="8.5" width="11" height="2" fill="#9a9a9a"/><rect x="0" y="11.5" width="12" height="2" fill="#9a9a9a"/><rect x="3" y="14.5" width="9" height="2.2" fill="#888"/><rect x="1" y="17.2" width="11" height="2" fill="#aaa"/><path d="M16.30 5.00L19.70 5.00M15.77 6.27L18.18 8.68M14.50 6.80L14.50 10.20M13.23 6.27L10.82 8.68M12.70 5.00L9.30 5.00M13.23 3.73L10.82 1.32M14.50 3.20L14.50 -0.20M15.77 3.73L18.18 1.32" stroke="#a8a8a8" stroke-width="1.6"/></svg>
<svg style="position:absolute;left:440px;top:165px;overflow:visible" width="20" height="20" viewBox="0 0 20 20"><rect x="0" y="5.5" width="11" height="2" fill="#9a9a9a"/><rect x="0" y="8.5" width="11" height="2" fill="#9a9a9a"/><rect x="0" y="11.5" width="12" height="2" fill="#9a9a9a"/><rect x="3" y="14.5" width="9" height="2.2" fill="#888"/><rect x="1" y="17.2" width="11" height="2" fill="#aaa"/><path d="M16.30 5.00L19.70 5.00M15.77 6.27L18.18 8.68M14.50 6.80L14.50 10.20M13.23 6.27L10.82 8.68M12.70 5.00L9.30 5.00M13.23 3.73L10.82 1.32M14.50 3.20L14.50 -0.20M15.77 3.73L18.18 1.32" stroke="#a8a8a8" stroke-width="1.6"/></svg>
<div style="position:absolute;left:467px;top:160px;width:1px;height:28px;border-left:1px dotted #9a9a9a"></div>
<svg style="position:absolute;left:476px;top:165px;overflow:visible" width="22" height="22" viewBox="0 0 22 22"><defs><linearGradient id="cyl" x1="0" x2="1"><stop offset="0" stop-color="#8a8a8a"/><stop offset=".5" stop-color="#b8b8b8"/><stop offset="1" stop-color="#888"/></linearGradient></defs><rect x="0" y="2" width="9" height="11" fill="url(#cyl)"/><ellipse cx="4.5" cy="2.5" rx="4.5" ry="2.2" fill="#c0c0c0"/><ellipse cx="4.5" cy="13" rx="4.5" ry="2" fill="#8a8a8a"/><path d="M12 15a3.5 3.5 0 1 1 4 4.5" fill="none" stroke="#666" stroke-width="2"/><path d="M10 13l3.5 3 1-4z" fill="#666"/></svg>
<div style="position:absolute;left:503px;top:160px;width:1px;height:28px;border-left:1px dotted #9a9a9a"></div>
<svg style="position:absolute;left:512px;top:165px;overflow:visible" width="22" height="20" viewBox="0 0 22 20"><path d="M0.5 1.5h7l1.5 2h11v3h-19.5z" fill="#777"/><path d="M0.5 8.5h7l1.5 1.5h11v3h-19.5z" fill="#777"/><path d="M0.5 14.5h7l1.5 1.5h11v3h-19.5z" fill="#777"/></svg>
<svg style="position:absolute;left:542px;top:165px;overflow:visible" width="20" height="20" viewBox="0 0 20 20"><defs><linearGradient id="bl" x1="0" y1="0" x2="0" y2="1"><stop offset="0" stop-color="#5a6af8"/><stop offset="1" stop-color="#2030d0"/></linearGradient></defs><rect x="0.5" y="0" width="18.5" height="19" fill="url(#bl)"/><rect x="2" y="5" width="15.5" height="12.5" fill="#eef0ff"/><path d="M3 2l3 2.5L9 2z" fill="#fff"/><path d="M2.5 11.5h14" stroke="#1a2060" stroke-width="1.5"/><rect x="2.2" y="9.5" width="1.2" height="4" fill="#1a2060"/></svg>
<svg style="position:absolute;left:572px;top:167px;overflow:visible" width="20" height="17" viewBox="0 0 20 17"><rect x="0" y="0" width="19.5" height="7.5" fill="url(#bl)"/><rect x="0" y="8.8" width="19.5" height="7.5" fill="url(#bl)"/><path d="M1 1l3 2.5L1 6z" fill="#fff"/><path d="M1 10l3 2.5L1 15z" fill="#fff"/></svg>
<div style="position:absolute;left:599px;top:161px;width:28px;height:27px;background:#fff;border:1px solid #7a9ae8;border-radius:2px;"></div>
<svg style="position:absolute;left:603px;top:166px;overflow:visible" width="20" height="18" viewBox="0 0 20 18"><path d="M10 1c5 0 9 3 9 7s-4 6.5-9 6.5l-5.5 3 1.5-3.5c-3-1-5-3.2-5-6 0-4 4-7 9-7z" fill="#e8ecff" stroke="#7a8ae8" stroke-width="1.5"/><circle cx="6" cy="8" r="1.5" fill="#111"/><circle cx="10" cy="8" r="1.5" fill="#111"/><circle cx="14" cy="8" r="1.5" fill="#111"/></svg>
<svg style="position:absolute;left:631px;top:165px;overflow:visible" width="20" height="19" viewBox="0 0 20 19"><path d="M4 3l4-3h11v7h-11z" fill="#7a2ac8"/><path d="M0 3.5h5" stroke="#111" stroke-width="1.4"/><text x="10" y="6.5" font-size="6.5" font-family="Liberation Sans" font-weight="bold" fill="#fff">01</text><path d="M4 13l4-3h11v7h-11z" fill="#7a2ac8"/><path d="M0 13.5h5" stroke="#111" stroke-width="1.4"/><path d="M10 12.5h7M10 14.5h7" stroke="#e8d8ff"/></svg>
<svg style="position:absolute;left:656px;top:169px;overflow:visible" width="10" height="13" viewBox="0 0 10 13"><path d="M5 0v7" stroke="#111" stroke-width="2.4"/><path d="M0.5 5.5h9L5 10z" fill="#111"/><rect x="0" y="11" width="10" height="2" fill="#111"/></svg>
<svg style="position:absolute;left:675px;top:164px;overflow:visible" width="21" height="21" viewBox="0 0 21 21"><path d="M11 1c4.5 0 8 2.5 8 6s-3.5 5.5-8 5.5l-4 2.5 1-3c-2.5-1-4-2.5-4-5 0-3.5 3-6 7-6z" fill="#e0e0e0" stroke="#555" stroke-width="1.3"/><circle cx="8" cy="7" r="1.3" fill="#111"/><circle cx="11.5" cy="7" r="1.3" fill="#111"/><circle cx="15" cy="7" r="1.3" fill="#111"/><path d="M6 16l4-3h9.5v7h-9.5z" fill="#333"/><path d="M0 16.5h6" stroke="#111" stroke-width="1.4"/></svg>
<svg style="position:absolute;left:700px;top:169px;overflow:visible" width="10" height="13" viewBox="0 0 10 13"><path d="M5 0v7" stroke="#111" stroke-width="2.4"/><path d="M0.5 5.5h9L5 10z" fill="#111"/><rect x="0" y="11" width="10" height="2" fill="#111"/></svg>
<svg style="position:absolute;left:718px;top:164px;overflow:visible" width="21" height="21" viewBox="0 0 21 21"><path d="M0.5 1v7M0.5 4.5h3M7 1l-3 3.5 3 3.5M12 1l3 3.5-3 3.5M18.5 1v7M15.5 4.5h3" stroke="#2a4ae8" stroke-width="2" fill="none"/><path d="M5 14l4-3h10.5v7h-10.5z" fill="#7a2ac8"/><path d="M0 14.5h5" stroke="#111" stroke-width="1.4"/><path d="M10 13.5h7M10 15.5h7" stroke="#e8d8ff"/></svg>
<svg style="position:absolute;left:744px;top:169px;overflow:visible" width="10" height="13" viewBox="0 0 10 13"><path d="M5 0v7" stroke="#111" stroke-width="2.4"/><path d="M0.5 5.5h9L5 10z" fill="#111"/><rect x="0" y="11" width="10" height="2" fill="#111"/></svg>
<svg style="position:absolute;left:764px;top:165px;overflow:visible" width="20" height="19" viewBox="0 0 20 19"><rect x="0.5" y="0.5" width="18" height="18" fill="#eef0fb" stroke="#8a9ad8"/><rect x="3" y="5" width="2" height="2" fill="#111"/><path d="M6.5 6h9" stroke="#111" stroke-width="2"/><path d="M3.5 11v4M3.5 13h12" stroke="#1a2a6a" stroke-width="1.5"/></svg>
<svg style="position:absolute;left:793px;top:164px;overflow:visible" width="22" height="22" viewBox="0 0 22 22"><rect x="0.5" y="3" width="4.5" height="4.5" fill="#fff" stroke="#5a6ae8" stroke-width="1.3"/><rect x="0.5" y="9.5" width="4.5" height="4.5" fill="#fff" stroke="#5a6ae8" stroke-width="1.3"/><rect x="0.5" y="16" width="4.5" height="4.5" fill="#fff" stroke="#5a6ae8" stroke-width="1.3"/><path d="M14.5 1l2.2 4.6 5 .6-3.7 3.4 1 5-4.5-2.5-4.5 2.5 1-5-3.7-3.4 5-.6z" fill="#f8d020" stroke="#b89010" stroke-width=".7"/><path d="M15 14v4h-7M10 16l-2 2 2 2" stroke="#1a2a6a" stroke-width="1.6" fill="none"/></svg>
<div style="position:absolute;left:821px;top:160px;width:1px;height:28px;border-left:1px dotted #9a9a9a"></div>
<svg style="position:absolute;left:830px;top:165px;overflow:visible" width="22" height="20" viewBox="0 0 22 20"><path d="M6 17.5a6.5 7 0 0 1 0-13" fill="none" stroke="#555" stroke-width="2.8"/><path d="M3.5 0.5l6 4-6 3.5z" fill="#555"/><circle cx="16" cy="5.5" r="4.8" fill="#b8b8b8" stroke="#9a9a9a"/><path d="M13.7 3.2l4.6 4.6M18.3 3.2l-4.6 4.6" stroke="#fff" stroke-width="1.6"/></svg>
<svg style="position:absolute;left:860px;top:165px;overflow:visible" width="22" height="20" viewBox="0 0 22 20"><path d="M6 1.5a6.5 7 0 0 0 0 13" fill="none" stroke="#555" stroke-width="2.8"/><path d="M3.5 11l6 4-6 3.5z" fill="#555"/><circle cx="15.5" cy="14" r="4.8" fill="#b8b8b8" stroke="#9a9a9a"/><path d="M13.2 11.7l4.6 4.6M17.8 11.7l-4.6 4.6" stroke="#fff" stroke-width="1.6"/></svg>
<svg style="position:absolute;left:890px;top:165px;overflow:visible" width="22" height="20" viewBox="0 0 22 20"><path d="M6 17.5a6.5 7 0 0 1 0-13" fill="none" stroke="#555" stroke-width="2.8"/><path d="M3.5 0.5l6 4-6 3.5z" fill="#555"/><rect x="8" y="2" width="10" height="15" fill="#a8a8a8"/><rect x="9" y="3" width="3" height="6" fill="#d8d8d8"/><rect x="10" y="11" width="7" height="4" fill="#fff" stroke="#555" stroke-width=".8"/></svg>
<svg style="position:absolute;left:920px;top:165px;overflow:visible" width="22" height="20" viewBox="0 0 22 20"><path d="M6 1.5a6.5 7 0 0 0 0 13" fill="none" stroke="#555" stroke-width="2.8"/><path d="M3.5 11l6 4-6 3.5z" fill="#555"/><rect x="8" y="4" width="10" height="15" fill="#a8a8a8"/><rect x="9" y="5" width="3" height="6" fill="#d8d8d8"/><rect x="10" y="13" width="7" height="4" fill="#fff" stroke="#555" stroke-width=".8"/></svg>
<svg style="position:absolute;left:949px;top:165px;overflow:visible" width="22" height="22" viewBox="0 0 22 22"><rect x="4" y="0" width="13" height="11" fill="#3a4458"/><path d="M0 3h4M0 8h4M17 5.5h3" stroke="#3a4458" stroke-width="2"/><path d="M8.5 2.5l5 3-5 3z" fill="#fff"/><path d="M6 13.5l4 4 9-9" fill="none" stroke="#20a020" stroke-width="3"/></svg>
<div style="position:absolute;left:977px;top:160px;width:1px;height:28px;border-left:1px dotted #9a9a9a"></div>
<svg style="position:absolute;left:986px;top:165px;overflow:visible" width="22" height="20" viewBox="0 0 22 20"><path d="M6 1.5a6.5 7 0 0 0 0 13" fill="none" stroke="#0a1850" stroke-width="3"/><path d="M3.5 11l6.5 4-6.5 3.5z" fill="#0a1850"/><rect x="11" y="5" width="9" height="2" fill="#999"/><rect x="11" y="8.5" width="9" height="2" fill="#999"/><rect x="11" y="12" width="9" height="2.2" fill="#4a6ae8"/></svg>
<svg style="position:absolute;left:1018px;top:165px;overflow:visible" width="20" height="20" viewBox="0 0 20 20"><rect x="1" y="1" width="2.5" height="10" fill="#333"/><rect x="6" y="9" width="9" height="2" fill="#999"/><rect x="6" y="12.5" width="9" height="2" fill="#999"/><rect x="6" y="16" width="9" height="2" fill="#999"/></svg>
<svg style="position:absolute;left:1046px;top:165px;overflow:visible" width="20" height="20" viewBox="0 0 20 20"><path d="M0 1l7 7" stroke="#333" stroke-width="2"/><rect x="5" y="1" width="2" height="8" fill="#333"/><rect x="9" y="9" width="9" height="2" fill="#999"/><rect x="9" y="12.5" width="9" height="2" fill="#999"/><rect x="9" y="16" width="9" height="2" fill="#999"/></svg>
<div style="position:absolute;left:1073px;top:160px;width:1px;height:28px;border-left:1px dotted #9a9a9a"></div>
<svg style="position:absolute;left:1083px;top:165px;overflow:visible" width="20" height="21" viewBox="0 0 20 21"><path d="M6 1.5a6 7 0 0 0 0 13" fill="none" stroke="#0a1850" stroke-width="3"/><path d="M3.5 11l6.5 4-6.5 3.5z" fill="#0a1850"/><path d="M11 5h5v14l-2.5-2-2.5 2z" fill="#3a4af0"/></svg>
<svg style="position:absolute;left:1113px;top:165px;overflow:visible" width="20" height="21" viewBox="0 0 20 21"><path d="M6 18.5a6 7 0 0 1 0-13" fill="none" stroke="#0a1850" stroke-width="3"/><path d="M3.5 2l6.5 4-6.5 3.5z" fill="#0a1850"/><path d="M11 1h5v14l-2.5-2-2.5 2z" fill="#3a4af0"/></svg>
<div style="position:absolute;left:1139px;top:160px;width:1px;height:28px;border-left:1px dotted #9a9a9a"></div>
<svg style="position:absolute;left:1149px;top:165px;overflow:visible" width="20" height="20" viewBox="0 0 20 20"><circle cx="5.5" cy="14" r="5.5" fill="#a8a8a8"/><path d="M5.5 8.5v11" stroke="#ddd"/><circle cx="10" cy="5" r="3.6" fill="none" stroke="#888" stroke-width="2"/><path d="M12.5 8l5 4.5" stroke="#888" stroke-width="2.6"/></svg>
<svg style="position:absolute;left:1178px;top:165px;overflow:visible" width="22" height="20" viewBox="0 0 22 20"><rect x="0.5" y="2" width="8" height="5" rx="1.5" fill="none" stroke="#555" stroke-width="1.8"/><rect x="11" y="2" width="8" height="5" rx="1.5" fill="none" stroke="#555" stroke-width="1.8"/><path d="M8.5 4h2.5M19 4a2 2 0 0 1 2 2" stroke="#555" stroke-width="1.6" fill="none"/><path d="M11 10l8 3.5-8 3.5z" fill="#ccc"/></svg>
<div style="position:absolute;left:1206px;top:160px;width:1px;height:28px;border-left:1px dotted #9a9a9a"></div>
<svg style="position:absolute;left:1215px;top:165px;overflow:visible" width="20" height="20" viewBox="0 0 20 20"><defs><linearGradient id="cyl2" x1="0" x2="1"><stop offset="0" stop-color="#999"/><stop offset=".5" stop-color="#c8c8c8"/><stop offset="1" stop-color="#999"/></linearGradient></defs><rect x="0" y="2.5" width="11" height="15" fill="url(#cyl2)"/><ellipse cx="5.5" cy="2.5" rx="5.5" ry="2.3" fill="#d0d0d0" stroke="#aaa" stroke-width=".6"/><ellipse cx="5.5" cy="17.5" rx="5.5" ry="2" fill="#999"/><rect x="12.5" y="12" width="6.5" height="6.5" fill="#888"/><path d="M13.8 12v-2a2 2 0 0 1 4 0v2" fill="none" stroke="#888" stroke-width="1.4"/></svg>
<svg style="position:absolute;left:1848px;top:164px" width="20" height="20" viewBox="0 0 20 20"><rect x="1" y="2" width="17" height="15" fill="#f2f4fc" stroke="#8a96d0"/><path d="M3 6h13M3 10h9" stroke="#8a96d0"/><circle cx="15" cy="13" r="2.5" fill="#223"/><path d="M11 20a4 4 0 0 1 8 0z" fill="#2a7ac8"/></svg>
<div style="position:absolute;left:1064px;top:195px;font-size:15px;line-height:15px;color:#f8f8f8;font-weight:normal;white-space:nowrap;">Block interface</div>
<div style="position:absolute;left:1079px;top:214px;width:29px;height:8px;background:linear-gradient(#f0f0f0,#d8d8d8);border-left:1px solid #9a9a9a;border-right:1px solid #9a9a9a;"></div>
<svg style="position:absolute;left:1089px;top:216px" width="10" height="6" viewBox="0 0 10 6"><path d="M0 5l4.5-5 4.5 5z" fill="#888"/></svg>
<div style="position:absolute;left:1122px;top:214px;width:29px;height:8px;background:linear-gradient(#c8c8c8,#e8e8e8);border-left:1px solid #9a9a9a;border-right:1px solid #9a9a9a;"></div>
<svg style="position:absolute;left:1132px;top:216px" width="10" height="6" viewBox="0 0 10 6"><path d="M0 0l4.5 5 4.5-5z" fill="#111"/></svg>
<div style="position:absolute;left:1867px;top:224px;width:22px;height:712px;background:#c4c4c4;"></div>
<div style="position:absolute;left:1868px;top:225px;width:20px;height:21px;background:linear-gradient(#f4f4f4,#e0e0e0);border:1px solid #b0b0b0;"></div>
<svg style="position:absolute;left:1870px;top:230px" width="16" height="12" viewBox="0 0 16 12"><path d="M2 9l6-6 6 6" fill="none" stroke="#444" stroke-width="2.2"/></svg>
<div style="position:absolute;left:1867px;top:369px;width:21px;height:146px;background:linear-gradient(90deg,#f0f0f0,#e0e0e0);border:1px solid #b4b4b4;"></div>
<div style="position:absolute;left:1872px;top:439px;width:10px;height:1px;background:#666;"></div>
<div style="position:absolute;left:1872px;top:442px;width:10px;height:1px;background:#666;"></div>
<div style="position:absolute;left:1872px;top:445px;width:10px;height:1px;background:#666;"></div>
<div style="position:absolute;left:1868px;top:915px;width:20px;height:20px;background:linear-gradient(#f4f4f4,#e0e0e0);border:1px solid #b0b0b0;"></div>
<svg style="position:absolute;left:1870px;top:919px" width="16" height="12" viewBox="0 0 16 12"><path d="M2 3l6 6 6-6" fill="none" stroke="#444" stroke-width="2.2"/></svg>
<div style="position:absolute;left:1544px;top:936px;width:195px;height:22px;background:#fff;border:1.5px solid #4a7ae0;"></div>
<div style="position:absolute;left:1549px;top:941px;font-size:13.5px;line-height:13.5px;color:#222;font-weight:normal;white-space:nowrap;">140%</div>
<div style="position:absolute;left:1716px;top:938px;width:21px;height:18px;background:linear-gradient(#f4f4f4,#d8d8d8);border-left:1px solid #9a9a9a;"></div>
<svg style="position:absolute;left:1721px;top:944px" width="10" height="6" viewBox="0 0 10 6"><path d="M0 0h10L5 6z" fill="#111"/></svg>
<div style="position:absolute;left:1762px;top:946px;width:85px;height:1px;background:#777;"></div>
<div style="position:absolute;left:1762px;top:953px;width:1px;height:4px;background:#555;"></div>
<div style="position:absolute;left:1768px;top:953px;width:1px;height:4px;background:#555;"></div>
<div style="position:absolute;left:1774px;top:953px;width:1px;height:4px;background:#555;"></div>
<div style="position:absolute;left:1780px;top:953px;width:1px;height:4px;background:#555;"></div>
<div style="position:absolute;left:1786px;top:953px;width:1px;height:4px;background:#555;"></div>
<div style="position:absolute;left:1792px;top:953px;width:1px;height:4px;background:#555;"></div>
<div style="position:absolute;left:1798px;top:953px;width:1px;height:4px;background:#555;"></div>
<div style="position:absolute;left:1804px;top:953px;width:1px;height:4px;background:#555;"></div>
<div style="position:absolute;left:1810px;top:953px;width:1px;height:4px;background:#555;"></div>
<div style="position:absolute;left:1816px;top:953px;width:1px;height:4px;background:#555;"></div>
<div style="position:absolute;left:1822px;top:953px;width:1px;height:4px;background:#555;"></div>
<div style="position:absolute;left:1828px;top:953px;width:1px;height:4px;background:#555;"></div>
<div style="position:absolute;left:1834px;top:953px;width:1px;height:4px;background:#555;"></div>
<div style="position:absolute;left:1840px;top:953px;width:1px;height:4px;background:#555;"></div>
<div style="position:absolute;left:1846px;top:953px;width:1px;height:4px;background:#555;"></div>
<div style="position:absolute;left:1809px;top:941px;width:9px;height:10px;background:#e8e8e8;border:1px solid #888;"></div>
<div style="position:absolute;left:1408px;top:966px;width:140px;height:27px;background:linear-gradient(#f6f6f6,#e6e6e6);border:1px solid #a8a8a8;border-left:2px solid #8a8a8a;border-bottom:none;"></div>
<svg style="position:absolute;left:1413px;top:971px" width="20" height="20" viewBox="0 0 20 20"><rect x="1" y="1" width="15" height="17" fill="#eef" stroke="#8a96d0"/><path d="M3 4h5M3 7h4" stroke="#8a96d0"/><circle cx="9" cy="10" r="4.5" fill="none" stroke="#223" stroke-width="2"/><path d="M12 13l5 5" stroke="#3a5ae8" stroke-width="3"/></svg>
<div style="position:absolute;left:1436px;top:971px;font-size:16.3px;line-height:16.3px;color:#111;font-weight:bold;white-space:nowrap;">Properties</div>
<div style="position:absolute;left:1550px;top:966px;width:94px;height:27px;background:linear-gradient(#e6e6e6,#d6d6d6);border:1px solid #a0a0a0;border-left:2px solid #8a8a8a;border-bottom:none;"></div>
<svg style="position:absolute;left:1553px;top:970px" width="20" height="20" viewBox="0 0 20 20"><rect x="3" y="3" width="14" height="15" fill="#eef" stroke="#8a96d0"/><path d="M1 4h6M4 1v6" stroke="#111" stroke-width="1.5"/><text x="7" y="15" font-size="12" font-weight="bold" font-family="Liberation Serif" fill="#223">i</text><path d="M12 17h7M16 14l3 3-3 3" stroke="#111" stroke-width="1.5" fill="none"/></svg>
<div style="position:absolute;left:1578px;top:971px;font-size:17px;line-height:17px;color:#8a8a8a;font-weight:bold;white-space:nowrap;">Info</div>
<svg style="position:absolute;left:1622px;top:971px" width="18" height="18" viewBox="0 0 18 18"><circle cx="9" cy="9" r="8" fill="#f0c800" stroke="#777"/><text x="6.5" y="14" font-size="12" font-weight="bold" font-family="Liberation Serif" fill="#111">i</text></svg>
<div style="position:absolute;left:1646px;top:966px;width:151px;height:27px;background:linear-gradient(#e6e6e6,#d6d6d6);border:1px solid #a0a0a0;border-left:2px solid #8a8a8a;border-bottom:none;"></div>
<svg style="position:absolute;left:1652px;top:970px" width="20" height="20" viewBox="0 0 20 20"><rect x="1" y="1" width="15" height="18" fill="#eef" stroke="#8a96d0"/><path d="M5 3v6a3 3 0 0 0 6 0V3M8 12v3a2 2 0 0 0 4 0" fill="none" stroke="#223" stroke-width="1.5"/><circle cx="12" cy="14" r="1.5" fill="#223"/></svg>
<div style="position:absolute;left:1674px;top:971px;font-size:16.5px;line-height:16.5px;color:#8a8a8a;font-weight:bold;white-space:nowrap;">Diagnostics</div>
<div style="position:absolute;left:1822px;top:975px;width:10px;height:10px;background:#f0f0f0;"></div>
<div style="position:absolute;left:1826px;top:972px;width:9px;height:9px;border:2px solid #f0f0f0;border-width:2px 2px 0 0;"></div>
<div style="position:absolute;left:1845px;top:973px;width:14px;height:13px;border:1px solid #d8d8d8;background:repeating-linear-gradient(#d8d8d8 0 1px,transparent 1px 3px);"></div>
<svg style="position:absolute;left:1867px;top:972px" width="16" height="10" viewBox="0 0 16 10"><path d="M0 9l8-9 8 9z" fill="#f4f4f4"/></svg>
<div style="position:absolute;left:341px;top:249px;width:1526px;height:25px;background:#d9d9d9;"></div>
<svg style="position:absolute;left:347px;top:257px" width="13" height="7" viewBox="0 0 13 7"><path d="M0 0h13L6.5 7z" fill="#111"/></svg>
<div style="position:absolute;left:391px;top:254px;font-size:17px;line-height:17px;color:#111;font-weight:bold;white-space:nowrap;">Network 3:</div>
<div style="position:absolute;left:494px;top:256px;font-size:12.6px;line-height:12.6px;color:#111;font-weight:normal;white-space:nowrap;">BURNER 1</div>
<div style="position:absolute;left:341px;top:704px;width:1526px;height:25px;background:#d9d9d9;"></div>
<svg style="position:absolute;left:347px;top:712px" width="13" height="7" viewBox="0 0 13 7"><path d="M0 0h13L6.5 7z" fill="#111"/></svg>
<div style="position:absolute;left:391px;top:709px;font-size:17px;line-height:17px;color:#111;font-weight:bold;white-space:nowrap;">Network 4:</div>
<div style="position:absolute;left:494px;top:711px;font-size:12.6px;line-height:12.6px;color:#111;font-weight:normal;white-space:nowrap;">BURNER 2</div>
<svg style="position:absolute;left:0;top:0" width="1920" height="1028" viewBox="0 0 1920 1028"><rect x="378.0" y="223" width="3.5" height="8" fill="#000"/><rect x="378.0" y="287" width="3.5" height="399" fill="#000"/><rect x="381" y="368.75" width="81.75" height="3.5" fill="#000"/><rect x="462.5" y="357.5" width="3.6" height="26" fill="#000"/><rect x="487.0" y="357.5" width="3.6" height="26" fill="#000"/><rect x="489.75" y="368.75" width="169.5" height="3.5" fill="#000"/><rect x="659.0" y="357.5" width="3.6" height="26" fill="#000"/><rect x="683.5" y="357.5" width="3.6" height="26" fill="#000"/><rect x="686.25" y="368.75" width="169.5" height="3.5" fill="#000"/><rect x="855.5" y="357.5" width="3.6" height="26" fill="#000"/><rect x="880.0" y="357.5" width="2.6" height="26" fill="#000"/><path d="M857.25 382.5 L879.25 358.5" stroke="#000" stroke-width="3.6"/><rect x="882.75" y="368.75" width="361.75" height="3.5" fill="#000"/><path d="M1247.0 358.0 Q1239.5 370.5 1247.0 383.0" fill="none" stroke="#000" stroke-width="3.6"/><path d="M1276.0 358.0 Q1283.5 370.5 1276.0 383.0" fill="none" stroke="#000" stroke-width="3.6"/><rect x="1278.5" y="368.75" width="67.5" height="3.5" fill="#000"/><rect x="1345" y="365.5" width="4" height="10" fill="#000"/><rect x="573.75" y="370.5" width="3.5" height="134.0" fill="#000"/><rect x="575.5" y="501.0" width="83.75" height="3.5" fill="#000"/><rect x="659.0" y="489.75" width="3.6" height="26" fill="#000"/><rect x="683.5" y="489.75" width="3.6" height="26" fill="#000"/><rect x="686.25" y="501.0" width="86.25" height="3.5" fill="#000"/><rect x="769.0" y="370.5" width="3.5" height="201.0" fill="#000"/><rect x="770.75" y="568.0" width="223.25" height="3.5" fill="#000"/><rect x="1136" y="568.0" width="108.5" height="3.5" fill="#000"/><path d="M1247.0 557.25 Q1239.5 569.75 1247.0 582.25" fill="none" stroke="#000" stroke-width="3.6"/><path d="M1276.0 557.25 Q1283.5 569.75 1276.0 582.25" fill="none" stroke="#000" stroke-width="3.6"/><rect x="1278.5" y="568.0" width="67.5" height="3.5" fill="#000"/><rect x="1345" y="564.75" width="4" height="10" fill="#000"/><rect x="967.5" y="601" width="26.5" height="4" fill="#f5a000"/><rect x="1136" y="601" width="26.5" height="4" fill="#f5a000"/><rect x="378.0" y="743" width="3.5" height="193" fill="#000"/><rect x="381" y="823.45" width="81.75" height="3.5" fill="#000"/><rect x="462.5" y="812.2" width="3.6" height="26" fill="#000"/><rect x="487.0" y="812.2" width="3.6" height="26" fill="#000"/><rect x="489.75" y="823.45" width="166.5" height="3.5" fill="#000"/><rect x="656" y="812.2" width="3.8" height="26" fill="#000"/><rect x="686" y="812.2" width="3.8" height="26" fill="#000"/><rect x="689" y="823.45" width="166.75" height="3.5" fill="#000"/><rect x="855.5" y="812.2" width="3.6" height="26" fill="#000"/><rect x="880.0" y="812.2" width="2.6" height="26" fill="#000"/><path d="M857.25 837.2 L879.25 813.2" stroke="#000" stroke-width="3.6"/><rect x="882.75" y="823.45" width="361.75" height="3.5" fill="#000"/><path d="M1247.0 812.7 Q1239.5 825.2 1247.0 837.7" fill="none" stroke="#000" stroke-width="3.6"/><path d="M1276.0 812.7 Q1283.5 825.2 1276.0 837.7" fill="none" stroke="#000" stroke-width="3.6"/><rect x="1278.5" y="823.45" width="67.5" height="3.5" fill="#000"/><rect x="1345" y="820.2" width="4" height="10" fill="#000"/><rect x="573.75" y="825.2" width="3.5" height="110.79999999999995" fill="#000"/><rect x="769.0" y="825.2" width="3.5" height="110.79999999999995" fill="#000"/></svg>
<div style="position:absolute;left:994px;top:490px;width:142px;height:59.5px;background:#c9cbd7;"></div>
<div style="position:absolute;left:994px;top:549.5px;width:142px;height:70px;background:#dedfe7;"></div>
<div style="position:absolute;left:1035px;top:519px;width:59px;height:27px;border:1px solid #e4e5ec;"></div>
<div style="position:absolute;left:1000px;top:586px;width:30px;height:2px;background:linear-gradient(90deg,#f4f4f8,#dedfe7);"></div>
<div style="position:absolute;left:1100px;top:586px;width:30px;height:2px;background:linear-gradient(90deg,#dedfe7,#f4f4f8);"></div>
<div style="position:absolute;left:175px;width:600px;text-align:center;top:297.90px;font-size:20.2px;line-height:20.2px;color:#17a0a4;font-weight:normal;white-space:nowrap;transform:scaleX(0.86);-webkit-text-stroke:0.85px #17a0a4;">%M2.0</div>
<div style="position:absolute;left:175px;width:600px;text-align:center;top:324.20px;font-size:20.2px;line-height:20.2px;color:#1a1a1a;font-weight:normal;white-space:nowrap;transform:scaleX(0.86);">"SYSTEM_ON"</div>
<div style="position:absolute;left:372px;width:600px;text-align:center;top:297.90px;font-size:20.2px;line-height:20.2px;color:#17a0a4;font-weight:normal;white-space:nowrap;transform:scaleX(0.86);-webkit-text-stroke:0.85px #17a0a4;">%I0.2</div>
<div style="position:absolute;left:372px;width:600px;text-align:center;top:324.20px;font-size:20.2px;line-height:20.2px;color:#1a1a1a;font-weight:normal;white-space:nowrap;transform:scaleX(0.86);">"SENS_IN"</div>
<div style="position:absolute;left:567px;width:600px;text-align:center;top:297.90px;font-size:20.2px;line-height:20.2px;color:#17a0a4;font-weight:normal;white-space:nowrap;transform:scaleX(0.86);-webkit-text-stroke:0.85px #17a0a4;">%M2.1</div>
<div style="position:absolute;left:567px;width:600px;text-align:center;top:324.20px;font-size:20.2px;line-height:20.2px;color:#1a1a1a;font-weight:normal;white-space:nowrap;transform:scaleX(0.86);">"IR_TIMER_1"</div>
<div style="position:absolute;left:959px;width:600px;text-align:center;top:297.90px;font-size:20.2px;line-height:20.2px;color:#17a0a4;font-weight:normal;white-space:nowrap;transform:scaleX(0.86);-webkit-text-stroke:0.85px #17a0a4;">%Q0.1</div>
<div style="position:absolute;left:959px;width:600px;text-align:center;top:324.20px;font-size:20.2px;line-height:20.2px;color:#1a1a1a;font-weight:normal;white-space:nowrap;transform:scaleX(0.86);">"BURNER_1"</div>
<div style="position:absolute;left:372px;width:600px;text-align:center;top:430.20px;font-size:20.2px;line-height:20.2px;color:#17a0a4;font-weight:normal;white-space:nowrap;transform:scaleX(0.86);-webkit-text-stroke:0.85px #17a0a4;">%Q0.1</div>
<div style="position:absolute;left:372px;width:600px;text-align:center;top:456.50px;font-size:20.2px;line-height:20.2px;color:#1a1a1a;font-weight:normal;white-space:nowrap;transform:scaleX(0.86);">"BURNER_1"</div>
<div style="position:absolute;left:763px;width:600px;text-align:center;top:430.20px;font-size:20.2px;line-height:20.2px;color:#17a0a4;font-weight:normal;white-space:nowrap;transform:scaleX(0.86);-webkit-text-stroke:0.85px #17a0a4;">%DB1</div>
<div style="position:absolute;left:763px;width:600px;text-align:center;top:456.50px;font-size:20.2px;line-height:20.2px;color:#1a1a1a;font-weight:normal;white-space:nowrap;transform:scaleX(0.86);">"TIMER1"</div>
<div style="position:absolute;left:959px;width:600px;text-align:center;top:497.70px;font-size:20.2px;line-height:20.2px;color:#17a0a4;font-weight:normal;white-space:nowrap;transform:scaleX(0.86);-webkit-text-stroke:0.85px #17a0a4;">%M2.1</div>
<div style="position:absolute;left:959px;width:600px;text-align:center;top:524.00px;font-size:20.2px;line-height:20.2px;color:#1a1a1a;font-weight:normal;white-space:nowrap;transform:scaleX(0.86);">"IR_TIMER_1"</div>
<div style="position:absolute;left:763px;width:600px;text-align:center;top:493.90px;font-size:20.2px;line-height:20.2px;color:#111;font-weight:normal;white-space:nowrap;transform:scaleX(0.86);">TON</div>
<div style="position:absolute;left:763px;width:600px;text-align:center;top:520.90px;font-size:20.2px;line-height:20.2px;color:#111;font-weight:normal;white-space:nowrap;transform:scaleX(0.86);">Time</div>
<div style="position:absolute;left:999.5px;top:560.40px;font-size:20.2px;line-height:20.2px;color:#111;white-space:nowrap;transform:scaleX(0.86);transform-origin:left">IN</div>
<div style="position:absolute;left:999.5px;top:593.90px;font-size:20.2px;line-height:20.2px;color:#111;white-space:nowrap;transform:scaleX(0.86);transform-origin:left">PT</div>
<div style="position:absolute;left:828px;width:300px;text-align:right;top:560.40px;font-size:20.2px;line-height:20.2px;color:#111;white-space:nowrap;transform:scaleX(0.86);transform-origin:right">Q</div>
<div style="position:absolute;left:828px;width:300px;text-align:right;top:593.90px;font-size:20.2px;line-height:20.2px;color:#111;white-space:nowrap;transform:scaleX(0.86);transform-origin:right">ET</div>
<div style="position:absolute;left:918px;top:594.03px;font-size:16.5px;line-height:16.5px;color:#4a80e0;font-weight:normal;white-space:nowrap;">T# 5s</div>
<div style="position:absolute;left:1168px;top:596px;font-size:15px;line-height:15px;color:#111;font-weight:bold;white-space:nowrap;">...</div>
<div style="position:absolute;left:175px;width:600px;text-align:center;top:752.40px;font-size:20.2px;line-height:20.2px;color:#17a0a4;font-weight:normal;white-space:nowrap;transform:scaleX(0.86);-webkit-text-stroke:0.85px #17a0a4;">%M2.0</div>
<div style="position:absolute;left:175px;width:600px;text-align:center;top:778.70px;font-size:20.2px;line-height:20.2px;color:#1a1a1a;font-weight:normal;white-space:nowrap;transform:scaleX(0.86);">"SYSTEM_ON"</div>
<div style="position:absolute;left:372px;width:600px;text-align:center;top:752.40px;font-size:20.2px;line-height:20.2px;color:#17a0a4;font-weight:normal;white-space:nowrap;transform:scaleX(0.86);-webkit-text-stroke:0.85px #17a0a4;">%M2.1</div>
<div style="position:absolute;left:372px;width:600px;text-align:center;top:778.70px;font-size:20.2px;line-height:20.2px;color:#1a1a1a;font-weight:normal;white-space:nowrap;transform:scaleX(0.86);">"IR_TIMER_1"</div>
<div style="position:absolute;left:567px;width:600px;text-align:center;top:752.40px;font-size:20.2px;line-height:20.2px;color:#17a0a4;font-weight:normal;white-space:nowrap;transform:scaleX(0.86);-webkit-text-stroke:0.85px #17a0a4;">%M2.2</div>
<div style="position:absolute;left:567px;width:600px;text-align:center;top:778.70px;font-size:20.2px;line-height:20.2px;color:#1a1a1a;font-weight:normal;white-space:nowrap;transform:scaleX(0.86);">"IR_TIMER_2"</div>
<div style="position:absolute;left:959px;width:600px;text-align:center;top:752.40px;font-size:20.2px;line-height:20.2px;color:#17a0a4;font-weight:normal;white-space:nowrap;transform:scaleX(0.86);-webkit-text-stroke:0.85px #17a0a4;">%Q0.2</div>
<div style="position:absolute;left:959px;width:600px;text-align:center;top:778.70px;font-size:20.2px;line-height:20.2px;color:#1a1a1a;font-weight:normal;white-space:nowrap;transform:scaleX(0.86);">"BURNER_2"</div>
<div style="position:absolute;left:372px;width:600px;text-align:center;top:845.10px;font-size:20.2px;line-height:20.2px;color:#17a0a4;font-weight:normal;white-space:nowrap;transform:scaleX(0.86);-webkit-text-stroke:0.85px #17a0a4;">%M2.5</div>
<div style="position:absolute;left:372px;width:600px;text-align:center;top:871.40px;font-size:20.2px;line-height:20.2px;color:#1a1a1a;font-weight:normal;white-space:nowrap;transform:scaleX(0.86);">"TEMP1"</div>
<div style="position:absolute;left:763px;width:600px;text-align:center;top:884.90px;font-size:20.2px;line-height:20.2px;color:#17a0a4;font-weight:normal;white-space:nowrap;transform:scaleX(0.86);-webkit-text-stroke:0.85px #17a0a4;">%DB2</div>
<div style="position:absolute;left:763px;width:600px;text-align:center;top:911.20px;font-size:20.2px;line-height:20.2px;color:#1a1a1a;font-weight:normal;white-space:nowrap;transform:scaleX(0.86);">"TIMER2"</div>
<div style="position:absolute;left:663px;width:20px;text-align:center;top:814.5px;font-size:17.5px;line-height:17.5px;color:#111;-webkit-text-stroke:0.5px #111;">P</div>
<svg style="position:absolute;left:1897px;top:100px" width="12" height="16" viewBox="0 0 12 16"><path d="M10 1L2 8l8 7z" fill="#f4f4f4"/></svg>
<div style="position:absolute;left:1891px;top:131px;width:25px;height:150px;background:linear-gradient(90deg,#f2f2f2,#e6e6e6);border:1px solid #a0a0a0;border-left:none;"></div>
<svg style="position:absolute;left:1894px;top:135px" width="18" height="20" viewBox="0 0 18 20"><rect x="1" y="2" width="7" height="7" fill="#fff" stroke="#556"/><rect x="10" y="2" width="7" height="7" fill="#fff" stroke="#556"/><rect x="1" y="11" width="7" height="7" fill="#fff" stroke="#556"/><rect x="10" y="11" width="7" height="7" fill="#fff" stroke="#556"/><path d="M3 5.5h3M12 5.5h3M3 14.5h3M12 14.5h3" stroke="#223"/></svg>
<div style="position:absolute;left:1822px;top:195px;width:160px;height:20px;transform:rotate(90deg);text-align:center;font-size:16px;line-height:20px;font-weight:bold;color:#111;white-space:nowrap;">Instructions</div>
<div style="position:absolute;left:1891px;top:285px;width:25px;height:114px;background:linear-gradient(90deg,#e0e0e0,#d2d2d2);border:1px solid #a0a0a0;border-left:none;"></div>
<svg style="position:absolute;left:1894px;top:289px" width="18" height="20" viewBox="0 0 18 20"><rect x="1" y="1" width="15" height="17" fill="#eef" stroke="#6a7ad8"/><path d="M5 3v6a3 3 0 0 0 6 0V3M8 12v3a2 2 0 0 0 4 0" fill="none" stroke="#223" stroke-width="1.5"/></svg>
<div style="position:absolute;left:1822px;top:332px;width:160px;height:20px;transform:rotate(90deg);text-align:center;font-size:16px;line-height:20px;font-weight:bold;color:#8a8a8a;white-space:nowrap;">Testing</div>
<div style="position:absolute;left:1891px;top:404px;width:25px;height:96px;background:linear-gradient(90deg,#e0e0e0,#d2d2d2);border:1px solid #a0a0a0;border-left:none;"></div>
<svg style="position:absolute;left:1894px;top:408px" width="18" height="20" viewBox="0 0 18 20"><rect x="2" y="2" width="13" height="15" fill="#f4e8c0" stroke="#a08a40"/><path d="M5 6h7M5 9h7" stroke="#335"/><path d="M6 13l3 3 8-9" fill="none" stroke="#2a9a2a" stroke-width="2.5"/></svg>
<div style="position:absolute;left:1822px;top:444px;width:160px;height:20px;transform:rotate(90deg);text-align:center;font-size:16px;line-height:20px;font-weight:bold;color:#8a8a8a;white-space:nowrap;">Tasks</div>
<div style="position:absolute;left:1891px;top:505px;width:25px;height:122px;background:linear-gradient(90deg,#e0e0e0,#d2d2d2);border:1px solid #a0a0a0;border-left:none;"></div>
<svg style="position:absolute;left:1894px;top:509px" width="18" height="20" viewBox="0 0 18 20"><path d="M1 3h8v14H1zM9 3h8v14H9z" fill="#fff" stroke="#1a3ab0" stroke-width="1.5"/></svg>
<div style="position:absolute;left:1822px;top:556px;width:160px;height:20px;transform:rotate(90deg);text-align:center;font-size:16px;line-height:20px;font-weight:bold;color:#8a8a8a;white-space:nowrap;">Libraries</div>
<div style="position:absolute;left:0px;top:993px;width:1920px;height:35px;background:#1c1c1c;"></div>
<svg style="position:absolute;left:44px;top:1003px" width="10" height="18" viewBox="0 0 10 18"><path d="M9 0L0 9l9 9z" fill="#f4f4f4"/></svg>
<div style="position:absolute;left:66px;top:1004.5px;font-size:17.4px;line-height:17.4px;color:#f4f4f4;font-weight:bold;white-space:nowrap;">Portal view</div>
<div style="position:absolute;left:226px;top:998px;width:141px;height:26px;background:#c4c4c4;"></div>
<svg style="position:absolute;left:230px;top:1001px" width="20" height="20" viewBox="0 0 20 20"><rect x="1" y="1" width="18" height="18" fill="#fff" stroke="#3a4a8a"/><path d="M1 5h18M5 1v18M7 9h3M12 9h3M7 14h3M12 14h3" stroke="#3a4a8a"/><path d="M7 11h3M12 11h3M7 16h3M12 16h3" stroke="#e27a10" stroke-width="2"/></svg>
<div style="position:absolute;left:255px;top:1003px;font-size:15px;line-height:15px;color:#222;font-weight:normal;white-space:nowrap;">Overview</div>
<div style="position:absolute;left:371px;top:998px;width:141px;height:26px;background:#fff;"></div>
<svg style="position:absolute;left:374px;top:1002px" width="20" height="20" viewBox="0 0 20 20"><rect x="4" y="4" width="12" height="11" fill="#a020d0" stroke="#601090"/><path d="M0 7h4M0 12h4M16 9.5h4" stroke="#601090" stroke-width="2"/><rect x="7" y="7" width="6" height="5" fill="#e070ff"/></svg>
<div style="position:absolute;left:400px;top:1003px;font-size:15px;line-height:15px;color:#111;font-weight:normal;white-space:nowrap;">Main (OB1)</div>
<div style="position:absolute;left:1497px;top:1000px;width:25px;height:23px;background:#c8c8c8;"></div>
<svg style="position:absolute;left:1499px;top:1002px" width="20" height="20" viewBox="0 0 20 20"><path d="M2 2h9M2 6h9M2 10h9" stroke="#223" stroke-width="1.5"/><path d="M15 12V3M12 6l3-3 3 3" stroke="#223" stroke-width="1.5" fill="none"/><rect x="2" y="14" width="16" height="5" fill="#fff" stroke="#223"/><path d="M4 16.5h2M9 16.5h2M14 16.5h2" stroke="#223" stroke-width="1.5"/></svg>
<div style="position:absolute;left:1530px;top:995px;width:1px;height:33px;background:#3a3a3a;"></div>
<svg style="position:absolute;left:1534px;top:1002px" width="19" height="19" viewBox="0 0 19 19"><circle cx="9.5" cy="9.5" r="9.5" fill="#1a2ae8"/><path d="M5 10l3.5 3.5L14.5 6" fill="none" stroke="#fff" stroke-width="2.5"/></svg>
<div style="position:absolute;left:1560px;top:1006px;font-size:14.6px;line-height:14.6px;color:#f4f4f4;font-weight:normal;white-space:nowrap;">Project Oven Program with a Moving C...</div>
</body></html>
